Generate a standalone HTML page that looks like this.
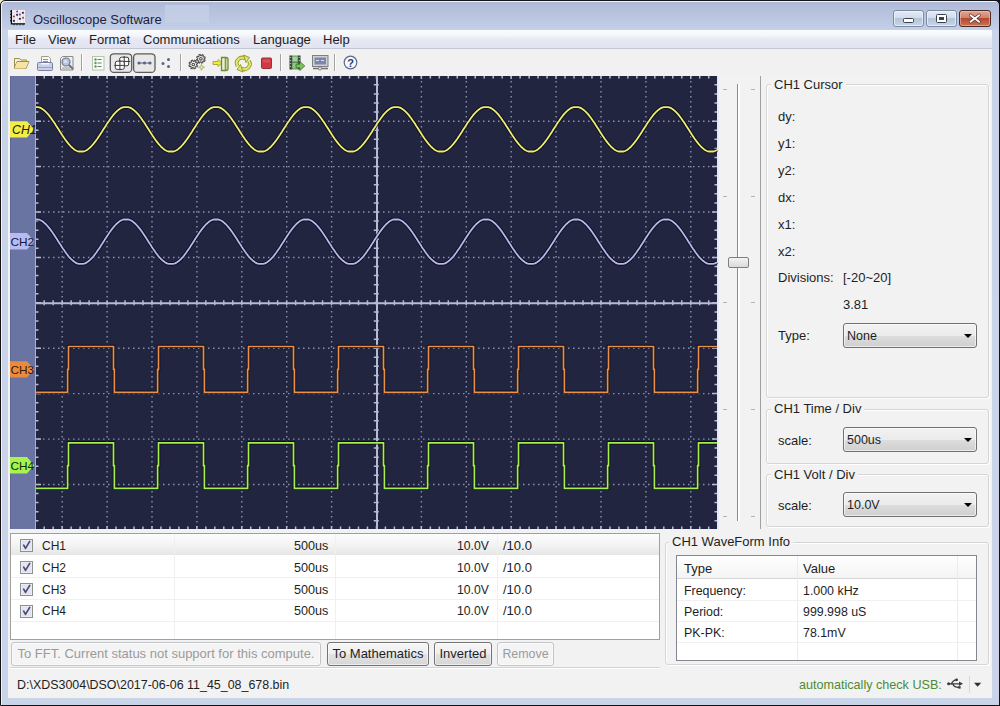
<!DOCTYPE html>
<html><head><meta charset="utf-8">
<style>
*{box-sizing:border-box;margin:0;padding:0}
html,body{width:1000px;height:706px;overflow:hidden;background:linear-gradient(90deg,#f2eed2 50%,#10121a 50%)}
body{font-family:"Liberation Sans",sans-serif;font-size:13px;color:#1e1e1e;position:relative}
.a{position:absolute}
.t{position:absolute;white-space:pre;line-height:14px}
#win{left:0;top:0;width:1000px;height:706px;border:1px solid #141414;border-radius:5px 5px 0 0;box-shadow:inset 1px 1px 0 #eef3fa;
 background:linear-gradient(#aebad8 2px,#b6c2dd 10px,#c2cee6 27px,#cad3ea 30px,#c8d3ea 120px,#cbd3ea 690px,#c6d5e6 706px)}
#client{left:8px;top:30px;width:984px;height:668px;background:#f2f2f2}
#menubar{left:8px;top:30px;width:984px;height:19px;background:linear-gradient(#fbfcfe 0,#f3f5fa 6px,#e6e8f3 9px,#e2e5f1 18px);border-bottom:1px solid #c2c6d2}
.capbtn{top:10px;height:17px;border:1px solid #6b7a94;border-radius:3px;background:linear-gradient(#d9e3f1 0,#cdd9ea 50%,#b8c6dc 51%,#c7d3e6 100%)}
.gb{position:absolute;border:1px solid #d5d5d5;border-radius:3px;box-shadow:inset 1px 1px 0 #fff,1px 1px 0 #fff}
.gbt{position:absolute;background:#f2f2f2;padding:0 3px;white-space:pre;line-height:14px}
.combo{position:absolute;height:25px;border:1px solid #707070;border-radius:3px;background:linear-gradient(#f2f2f2 0,#ebebeb 50%,#dddddd 51%,#cfcfcf 100%);box-shadow:inset 0 0 0 1px rgba(255,255,255,.6)}
.combo span{position:absolute;left:3px;top:5px;white-space:pre;line-height:14px;font-size:12.5px}
.combo i{position:absolute;right:4px;top:10px;width:0;height:0;border-left:4px solid transparent;border-right:4px solid transparent;border-top:4px solid #000}
.btn{position:absolute;height:24px;border:1px solid #747474;border-radius:3px;background:linear-gradient(#f6f6f6 0,#eeeeee 50%,#e2e2e2 51%,#d6d6d6 100%);box-shadow:inset 0 0 0 1px rgba(255,255,255,.55);text-align:center;line-height:21px;white-space:pre}
.btn.dis{border-color:#c2c6ca;background:#f4f4f4;color:#9a9a9a}
</style></head><body>
<div id="win" class="a"></div>
<div id="client" class="a"></div>
<!-- title -->
<svg class="a" style="left:8px;top:7px" width="20" height="20" viewBox="8 7 20 20">
<rect x="12" y="10" width="13" height="13" fill="#f6f2f6"/>
<path d="M14.5 10v13M17.5 10v13M20.5 10v13M23.5 10v13M12 13h13M12 16h13M12 19h13" stroke="#ddd6dc" stroke-width=".6"/>
<path d="M11.4 10v13.9H25" stroke="#0a0a0a" stroke-width="1.3" fill="none"/>
<path d="M10.2 11.3h1M10.2 14.4h1M10.2 17.5h1M10.2 20.6h1M14 24.2v1M17 24.2v1M20 24.2v1M23 24.2v1" stroke="#0a0a0a" stroke-width="1.1"/>
<g fill="#2c2686"><circle cx="22.9" cy="12.8" r="1.1"/><circle cx="17.1" cy="14.8" r="1.1"/><circle cx="19.9" cy="18.8" r="1.1"/><circle cx="13.9" cy="20.9" r="1.1"/></g>
<g fill="#8a4a3a"><circle cx="17.1" cy="11.5" r="1"/><circle cx="19.9" cy="14.6" r="1"/><circle cx="13.9" cy="16.5" r="1"/><circle cx="23" cy="17.8" r="1"/></g>
</svg>
<div class="t" style="left:33px;top:13px;color:#1c2340">Oscilloscope Software</div>
<svg class="a" style="left:880px;top:0" width="120" height="30" viewBox="880 0 120 30">
<defs>
<linearGradient id="cb" x1="0" y1="0" x2="0" y2="1"><stop offset="0" stop-color="#e4ebf5"/><stop offset=".45" stop-color="#d3ddeb"/><stop offset=".5" stop-color="#b4c4db"/><stop offset="1" stop-color="#c9d6e8"/></linearGradient>
<linearGradient id="cc" x1="0" y1="0" x2="0" y2="1"><stop offset="0" stop-color="#e4a898"/><stop offset=".45" stop-color="#d0826e"/><stop offset=".5" stop-color="#b8482e"/><stop offset="1" stop-color="#cc7458"/></linearGradient>
</defs>
<rect x="893.5" y="10.5" width="30" height="16" rx="2.5" fill="url(#cb)" stroke="#7d8aa3" stroke-width="1"/>
<rect x="894.5" y="11.5" width="28" height="14" rx="2" fill="none" stroke="#f2f6fb" stroke-opacity=".7" stroke-width="1"/>
<rect x="926.5" y="10.5" width="30" height="16" rx="2.5" fill="url(#cb)" stroke="#7d8aa3" stroke-width="1"/>
<rect x="927.5" y="11.5" width="28" height="14" rx="2" fill="none" stroke="#f2f6fb" stroke-opacity=".7" stroke-width="1"/>
<rect x="959.5" y="10.5" width="31" height="16" rx="2.5" fill="url(#cc)" stroke="#4a2a24" stroke-width="1"/>
<rect x="960.5" y="11.5" width="29" height="14" rx="2" fill="none" stroke="#f6d0c4" stroke-opacity=".5" stroke-width="1"/>
<rect x="903.5" y="18.5" width="10" height="4" rx="1" fill="#fff" stroke="#3a4050" stroke-width="1"/>
<rect x="936.5" y="14.5" width="10" height="8" rx="1" fill="#fff" stroke="#3a4050" stroke-width="1"/>
<rect x="939" y="17" width="5" height="3" fill="#3a4050"/>
<path d="M970.5 15.2l8.6 6.6M979.1 15.2l-8.6 6.6" stroke="#40302a" stroke-width="3.2" stroke-linecap="round"/>
<path d="M970.5 15.2l8.6 6.6M979.1 15.2l-8.6 6.6" stroke="#fff" stroke-width="1.9" stroke-linecap="round"/>
</svg>
<div class="a" style="left:165px;top:5px;width:44px;height:18px;background:#c6d0e6;opacity:.8"></div>
<!-- menubar -->
<div id="menubar" class="a"></div>
<div class="t" style="left:15px;top:33px">File</div>
<div class="t" style="left:48px;top:33px">View</div>
<div class="t" style="left:89px;top:33px">Format</div>
<div class="t" style="left:143px;top:33px">Communications</div>
<div class="t" style="left:253px;top:33px">Language</div>
<div class="t" style="left:323px;top:33px">Help</div>
<!-- toolbar -->
<div class="a" style="left:8px;top:49px;width:984px;height:27px;background:#f1f1f1"></div>
<svg class="a" style="left:0;top:0" width="370" height="80" viewBox="0 0 370 80">
<!-- folder -->
<path d="M14.5 58.5h5l1.5 1.5h5.5v2" fill="#efe2a8" stroke="#a08f4c" stroke-width="1"/>
<path d="M14.5 58.5v10h11.5l3-7h-12l-2.5 6" fill="#f0e098" stroke="#a08f4c" stroke-width="1" stroke-linejoin="round"/>
<path d="M17 62h11.5l-3 6.5h-11z" fill="#f4e6a0"/>
<!-- printer -->
<path d="M41.5 56.5h7l2 2v5h-9z" fill="#fbfbf4" stroke="#9aa090" stroke-width="1"/>
<path d="M43 59.5h5M43 61.5h5" stroke="#8a8f9a" stroke-width="1"/>
<path d="M38.5 62.5h13a1 1 0 0 1 1 1v6a1 1 0 0 1-1 1h-13a1 1 0 0 1-1-1v-6a1 1 0 0 1 1-1z" fill="#c9d0e8" stroke="#7880a8" stroke-width="1"/>
<path d="M38 67.5h14" stroke="#9aa2c8" stroke-width="1"/>
<path d="M41 63h8v1.5h-8z" fill="#f8f8fc"/>
<!-- preview -->
<path d="M62.5 56.5h10.5v13.5h-12.5v-11.5z" fill="#eeeeee" stroke="#8a8a8a" stroke-width="1"/>
<circle cx="66" cy="62" r="4" fill="#b8c4e0" stroke="#707a90" stroke-width="1.2"/>
<circle cx="65.5" cy="61.5" r="1.6" fill="#dde4f4"/>
<path d="M69 65l4 4" stroke="#707070" stroke-width="2"/>
<path d="M62 68h8" stroke="#9a9a9a" stroke-width="1"/>
<!-- separators -->
<path d="M81.5 54v17M180.5 54v17M280.5 54v17M334.5 54v17" stroke="#a2a2a2" stroke-width="1"/>
<path d="M82.5 54v17M181.5 54v17M281.5 54v17M335.5 54v17" stroke="#ffffff" stroke-width="1"/>
<!-- list icon -->
<rect x="92.5" y="56.5" width="11.5" height="13.5" fill="#f8fbf6" stroke="#b6c4b0" stroke-width="1"/>
<circle cx="95.5" cy="59.5" r="1.2" fill="#5a9a5a"/><circle cx="95.5" cy="63" r="1.2" fill="#5a9a5a"/><circle cx="95.5" cy="66.5" r="1.2" fill="#5a9a5a"/>
<path d="M97.5 59.5h4M97.5 63h4M97.5 66.5h4" stroke="#707870" stroke-width="1"/>
<!-- pressed buttons -->
<rect x="110.3" y="53.8" width="21.4" height="18.6" rx="3.5" fill="#e8e8e8" stroke="#5c5c5c" stroke-width="1.3"/>
<rect x="133.6" y="53.8" width="21.4" height="18.6" rx="3.5" fill="#e8e8e8" stroke="#5c5c5c" stroke-width="1.3"/>
<!-- grid icon -->
<g fill="#fff" stroke="#3c3c3c" stroke-width="1">
<rect x="119.7" y="57.2" width="9" height="8.6" rx="1.8"/>
<path d="M124.2 56v9.8M119.7 61.4h10.6" fill="none"/>
<rect x="115.3" y="61.2" width="9" height="8.2" rx="1.8"/>
<path d="M119.9 60v10.2M114.3 65.4h10" fill="none"/>
</g>
<!-- dots-line icon -->
<path d="M138 63h13" stroke="#8890b0" stroke-width="1.5"/>
<circle cx="139" cy="63" r="1.6" fill="#5a6488"/><circle cx="144.5" cy="63" r="1.6" fill="#5a6488"/><circle cx="150" cy="63" r="1.6" fill="#5a6488"/>
<!-- loose dots -->
<circle cx="163" cy="63.5" r="1.5" fill="#5a6488"/><circle cx="168.5" cy="59.5" r="1.5" fill="#5a6488"/><circle cx="168.5" cy="66.5" r="1.5" fill="#5a6488"/>
<!-- gears -->
<g fill="#f8f8f8" stroke="#505050" stroke-width="1.1">
<path d="M196.44 65.14 L197.48 65.87 L196.95 66.96 L195.73 66.59 L195.07 67.17 L195.28 68.43 L194.14 68.82 L193.54 67.69 L192.66 67.64 L191.93 68.68 L190.84 68.15 L191.21 66.93 L190.63 66.27 L189.37 66.48 L188.98 65.34 L190.11 64.74 L190.16 63.86 L189.12 63.13 L189.65 62.04 L190.87 62.41 L191.53 61.83 L191.32 60.57 L192.46 60.18 L193.06 61.31 L193.94 61.36 L194.67 60.32 L195.76 60.85 L195.39 62.07 L195.97 62.73 L197.23 62.52 L197.62 63.66 L196.49 64.26Z"/><circle cx="193.3" cy="64.5" r="1.3"/>
<path d="M204.04 59.44 L205.08 60.17 L204.55 61.26 L203.33 60.89 L202.67 61.47 L202.88 62.73 L201.74 63.12 L201.14 61.99 L200.26 61.94 L199.53 62.98 L198.44 62.45 L198.81 61.23 L198.23 60.57 L196.97 60.78 L196.58 59.64 L197.71 59.04 L197.76 58.16 L196.72 57.43 L197.25 56.34 L198.47 56.71 L199.13 56.13 L198.92 54.87 L200.06 54.48 L200.66 55.61 L201.54 55.66 L202.27 54.62 L203.36 55.15 L202.99 56.37 L203.57 57.03 L204.83 56.82 L205.22 57.96 L204.09 58.56Z"/><circle cx="200.9" cy="58.8" r="1.3"/>
</g>
<path d="M201.5 64.3l.9 2.1 2.1.9-2.1.9-.9 2.1-.9-2.1-2.1-.9 2.1-.9z" fill="#e4e888" stroke="#98a050" stroke-width=".7"/>
<!-- import -->
<path d="M213 61.5h5v-2l4 3.5-4 3.5v-2h-5z" fill="#f0ea40" stroke="#9a9a30" stroke-width="0.8"/>
<path d="M221.5 57.5h4.5a2 2 0 0 1 2 2v9a2 2 0 0 1-2 2h-4.5z" fill="#e8eed8" stroke="#6f8a30" stroke-width="1.3"/>
<path d="M225.5 58v12" stroke="#7a9a3a" stroke-width="1.6"/>
<!-- refresh -->
<g fill="none" stroke-linecap="butt">
<path d="M237.5 66a5.5 5.5 0 0 1 8-7.2" stroke="#8c9434" stroke-width="3.8"/>
<path d="M249 61a5.5 5.5 0 0 1-8 7.2" stroke="#8c9434" stroke-width="3.8"/>
<path d="M237.5 66a5.5 5.5 0 0 1 8-7.2" stroke="#e2e45a" stroke-width="2.2"/>
<path d="M249 61a5.5 5.5 0 0 1-8 7.2" stroke="#e2e45a" stroke-width="2.2"/>
</g>
<path d="M243.5 55l6 2.5-3.5 5z" fill="#e2e45a" stroke="#8c9434" stroke-width=".9" stroke-linejoin="round"/>
<path d="M243 72l-6-2.5 3.5-5z" fill="#e2e45a" stroke="#8c9434" stroke-width=".9" stroke-linejoin="round"/>
<!-- stop -->
<rect x="261.5" y="58" width="10" height="10.5" rx="1" fill="#cf3a44" stroke="#9a3038" stroke-width="1"/><rect x="263" y="59.5" width="7" height="3" fill="#e06068" opacity=".6"/>
<!-- film -->
<rect x="289.5" y="55.5" width="2.5" height="14" fill="#34423a"/>
<rect x="298" y="55.5" width="2.5" height="14" fill="#34423a"/>
<path d="M290.7 57v1M290.7 60v1M290.7 63v1M290.7 66v1M299.2 57v1M299.2 60v1" stroke="#c8d8c8" stroke-width="1"/>
<rect x="292" y="56" width="6" height="6" fill="#9ad890" stroke="#4a6a4a" stroke-width=".7"/>
<rect x="292" y="62.5" width="6" height="6.5" fill="#8ccc80" stroke="#4a6a4a" stroke-width=".7"/>
<path d="M296 64.2h3.8v-2.7l5 4.5-5 4.5v-2.7h-3.8z" fill="#7cc25a" stroke="#3a7030" stroke-width=".8"/>
<!-- monitor -->
<rect x="312.5" y="55.5" width="15.5" height="11" fill="#d0d0d0" stroke="#808080" stroke-width="1"/>
<rect x="314.5" y="57.5" width="11.5" height="7" fill="#7a88b0"/>
<path d="M316 60.5h3M321 60.5h3" stroke="#dde3f0" stroke-width="1.2"/>
<path d="M313 68.5h15" stroke="#707070" stroke-width="1.5"/>
<circle cx="320" cy="68.5" r="1.6" fill="#e8e8e8" stroke="#707070" stroke-width="0.8"/>
<!-- help -->
<circle cx="350.5" cy="62.5" r="6.3" fill="#f6f8fc" stroke="#5a6890" stroke-width="1.2"/>
<text x="350.5" y="66.8" font-family="Liberation Sans" font-weight="bold" font-size="11" text-anchor="middle" fill="#2a3a78">?</text>
</svg>

<svg width="709" height="453" viewBox="0 0 709 453" style="position:absolute;left:10px;top:76px;display:block"><rect x="0" y="0" width="26" height="453" fill="#6974a2"/><rect x="0" y="0" width="1" height="453" fill="#5d6792"/><rect x="26" y="0" width="681" height="453" fill="#222540"/><g stroke="#8a90ae" stroke-width="1.4" stroke-dasharray="1.5 3.5"><line x1="52.20" y1="0.1" x2="52.20" y2="453" /><line x1="97.10" y1="0.1" x2="97.10" y2="453" /><line x1="142.00" y1="0.1" x2="142.00" y2="453" /><line x1="186.90" y1="0.1" x2="186.90" y2="453" /><line x1="231.80" y1="0.1" x2="231.80" y2="453" /><line x1="276.70" y1="0.1" x2="276.70" y2="453" /><line x1="321.60" y1="0.1" x2="321.60" y2="453" /><line x1="411.40" y1="0.1" x2="411.40" y2="453" /><line x1="456.30" y1="0.1" x2="456.30" y2="453" /><line x1="501.20" y1="0.1" x2="501.20" y2="453" /><line x1="546.10" y1="0.1" x2="546.10" y2="453" /><line x1="591.00" y1="0.1" x2="591.00" y2="453" /><line x1="635.90" y1="0.1" x2="635.90" y2="453" /><line x1="680.80" y1="0.1" x2="680.80" y2="453" /><line x1="28" y1="45.21" x2="707" y2="45.21" /><line x1="28" y1="90.62" x2="707" y2="90.62" /><line x1="28" y1="136.03" x2="707" y2="136.03" /><line x1="28" y1="181.44" x2="707" y2="181.44" /><line x1="28" y1="272.26" x2="707" y2="272.26" /><line x1="28" y1="317.67" x2="707" y2="317.67" /><line x1="28" y1="363.08" x2="707" y2="363.08" /><line x1="28" y1="408.49" x2="707" y2="408.49" /></g><rect x="26" y="226.25" width="681" height="2" fill="#b6bad2"/><rect x="366.00" y="0" width="2" height="453" fill="#b6bad2"/><path d="M33.44 0h1.5v2.5h-1.5zM33.44 450.5h1.5v2.5h-1.5zM33.44 224.15h1.5v5h-1.5zM42.42 0h1.5v2.5h-1.5zM42.42 450.5h1.5v2.5h-1.5zM42.42 224.15h1.5v5h-1.5zM51.40 0h1.5v3h-1.5zM51.40 450h1.5v3h-1.5zM51.40 224.15h1.5v5h-1.5zM60.38 0h1.5v2.5h-1.5zM60.38 450.5h1.5v2.5h-1.5zM60.38 224.15h1.5v5h-1.5zM69.36 0h1.5v2.5h-1.5zM69.36 450.5h1.5v2.5h-1.5zM69.36 224.15h1.5v5h-1.5zM78.34 0h1.5v2.5h-1.5zM78.34 450.5h1.5v2.5h-1.5zM78.34 224.15h1.5v5h-1.5zM87.32 0h1.5v2.5h-1.5zM87.32 450.5h1.5v2.5h-1.5zM87.32 224.15h1.5v5h-1.5zM96.30 0h1.5v3h-1.5zM96.30 450h1.5v3h-1.5zM96.30 224.15h1.5v5h-1.5zM105.28 0h1.5v2.5h-1.5zM105.28 450.5h1.5v2.5h-1.5zM105.28 224.15h1.5v5h-1.5zM114.26 0h1.5v2.5h-1.5zM114.26 450.5h1.5v2.5h-1.5zM114.26 224.15h1.5v5h-1.5zM123.24 0h1.5v2.5h-1.5zM123.24 450.5h1.5v2.5h-1.5zM123.24 224.15h1.5v5h-1.5zM132.22 0h1.5v2.5h-1.5zM132.22 450.5h1.5v2.5h-1.5zM132.22 224.15h1.5v5h-1.5zM141.20 0h1.5v3h-1.5zM141.20 450h1.5v3h-1.5zM141.20 224.15h1.5v5h-1.5zM150.18 0h1.5v2.5h-1.5zM150.18 450.5h1.5v2.5h-1.5zM150.18 224.15h1.5v5h-1.5zM159.16 0h1.5v2.5h-1.5zM159.16 450.5h1.5v2.5h-1.5zM159.16 224.15h1.5v5h-1.5zM168.14 0h1.5v2.5h-1.5zM168.14 450.5h1.5v2.5h-1.5zM168.14 224.15h1.5v5h-1.5zM177.12 0h1.5v2.5h-1.5zM177.12 450.5h1.5v2.5h-1.5zM177.12 224.15h1.5v5h-1.5zM186.10 0h1.5v3h-1.5zM186.10 450h1.5v3h-1.5zM186.10 224.15h1.5v5h-1.5zM195.08 0h1.5v2.5h-1.5zM195.08 450.5h1.5v2.5h-1.5zM195.08 224.15h1.5v5h-1.5zM204.06 0h1.5v2.5h-1.5zM204.06 450.5h1.5v2.5h-1.5zM204.06 224.15h1.5v5h-1.5zM213.04 0h1.5v2.5h-1.5zM213.04 450.5h1.5v2.5h-1.5zM213.04 224.15h1.5v5h-1.5zM222.02 0h1.5v2.5h-1.5zM222.02 450.5h1.5v2.5h-1.5zM222.02 224.15h1.5v5h-1.5zM231.00 0h1.5v3h-1.5zM231.00 450h1.5v3h-1.5zM231.00 224.15h1.5v5h-1.5zM239.98 0h1.5v2.5h-1.5zM239.98 450.5h1.5v2.5h-1.5zM239.98 224.15h1.5v5h-1.5zM248.96 0h1.5v2.5h-1.5zM248.96 450.5h1.5v2.5h-1.5zM248.96 224.15h1.5v5h-1.5zM257.94 0h1.5v2.5h-1.5zM257.94 450.5h1.5v2.5h-1.5zM257.94 224.15h1.5v5h-1.5zM266.92 0h1.5v2.5h-1.5zM266.92 450.5h1.5v2.5h-1.5zM266.92 224.15h1.5v5h-1.5zM275.90 0h1.5v3h-1.5zM275.90 450h1.5v3h-1.5zM275.90 224.15h1.5v5h-1.5zM284.88 0h1.5v2.5h-1.5zM284.88 450.5h1.5v2.5h-1.5zM284.88 224.15h1.5v5h-1.5zM293.86 0h1.5v2.5h-1.5zM293.86 450.5h1.5v2.5h-1.5zM293.86 224.15h1.5v5h-1.5zM302.84 0h1.5v2.5h-1.5zM302.84 450.5h1.5v2.5h-1.5zM302.84 224.15h1.5v5h-1.5zM311.82 0h1.5v2.5h-1.5zM311.82 450.5h1.5v2.5h-1.5zM311.82 224.15h1.5v5h-1.5zM320.80 0h1.5v3h-1.5zM320.80 450h1.5v3h-1.5zM320.80 224.15h1.5v5h-1.5zM329.78 0h1.5v2.5h-1.5zM329.78 450.5h1.5v2.5h-1.5zM329.78 224.15h1.5v5h-1.5zM338.76 0h1.5v2.5h-1.5zM338.76 450.5h1.5v2.5h-1.5zM338.76 224.15h1.5v5h-1.5zM347.74 0h1.5v2.5h-1.5zM347.74 450.5h1.5v2.5h-1.5zM347.74 224.15h1.5v5h-1.5zM356.72 0h1.5v2.5h-1.5zM356.72 450.5h1.5v2.5h-1.5zM356.72 224.15h1.5v5h-1.5zM365.70 0h1.5v3h-1.5zM365.70 450h1.5v3h-1.5zM365.70 224.15h1.5v5h-1.5zM374.68 0h1.5v2.5h-1.5zM374.68 450.5h1.5v2.5h-1.5zM374.68 224.15h1.5v5h-1.5zM383.66 0h1.5v2.5h-1.5zM383.66 450.5h1.5v2.5h-1.5zM383.66 224.15h1.5v5h-1.5zM392.64 0h1.5v2.5h-1.5zM392.64 450.5h1.5v2.5h-1.5zM392.64 224.15h1.5v5h-1.5zM401.62 0h1.5v2.5h-1.5zM401.62 450.5h1.5v2.5h-1.5zM401.62 224.15h1.5v5h-1.5zM410.60 0h1.5v3h-1.5zM410.60 450h1.5v3h-1.5zM410.60 224.15h1.5v5h-1.5zM419.58 0h1.5v2.5h-1.5zM419.58 450.5h1.5v2.5h-1.5zM419.58 224.15h1.5v5h-1.5zM428.56 0h1.5v2.5h-1.5zM428.56 450.5h1.5v2.5h-1.5zM428.56 224.15h1.5v5h-1.5zM437.54 0h1.5v2.5h-1.5zM437.54 450.5h1.5v2.5h-1.5zM437.54 224.15h1.5v5h-1.5zM446.52 0h1.5v2.5h-1.5zM446.52 450.5h1.5v2.5h-1.5zM446.52 224.15h1.5v5h-1.5zM455.50 0h1.5v3h-1.5zM455.50 450h1.5v3h-1.5zM455.50 224.15h1.5v5h-1.5zM464.48 0h1.5v2.5h-1.5zM464.48 450.5h1.5v2.5h-1.5zM464.48 224.15h1.5v5h-1.5zM473.46 0h1.5v2.5h-1.5zM473.46 450.5h1.5v2.5h-1.5zM473.46 224.15h1.5v5h-1.5zM482.44 0h1.5v2.5h-1.5zM482.44 450.5h1.5v2.5h-1.5zM482.44 224.15h1.5v5h-1.5zM491.42 0h1.5v2.5h-1.5zM491.42 450.5h1.5v2.5h-1.5zM491.42 224.15h1.5v5h-1.5zM500.40 0h1.5v3h-1.5zM500.40 450h1.5v3h-1.5zM500.40 224.15h1.5v5h-1.5zM509.38 0h1.5v2.5h-1.5zM509.38 450.5h1.5v2.5h-1.5zM509.38 224.15h1.5v5h-1.5zM518.36 0h1.5v2.5h-1.5zM518.36 450.5h1.5v2.5h-1.5zM518.36 224.15h1.5v5h-1.5zM527.34 0h1.5v2.5h-1.5zM527.34 450.5h1.5v2.5h-1.5zM527.34 224.15h1.5v5h-1.5zM536.32 0h1.5v2.5h-1.5zM536.32 450.5h1.5v2.5h-1.5zM536.32 224.15h1.5v5h-1.5zM545.30 0h1.5v3h-1.5zM545.30 450h1.5v3h-1.5zM545.30 224.15h1.5v5h-1.5zM554.28 0h1.5v2.5h-1.5zM554.28 450.5h1.5v2.5h-1.5zM554.28 224.15h1.5v5h-1.5zM563.26 0h1.5v2.5h-1.5zM563.26 450.5h1.5v2.5h-1.5zM563.26 224.15h1.5v5h-1.5zM572.24 0h1.5v2.5h-1.5zM572.24 450.5h1.5v2.5h-1.5zM572.24 224.15h1.5v5h-1.5zM581.22 0h1.5v2.5h-1.5zM581.22 450.5h1.5v2.5h-1.5zM581.22 224.15h1.5v5h-1.5zM590.20 0h1.5v3h-1.5zM590.20 450h1.5v3h-1.5zM590.20 224.15h1.5v5h-1.5zM599.18 0h1.5v2.5h-1.5zM599.18 450.5h1.5v2.5h-1.5zM599.18 224.15h1.5v5h-1.5zM608.16 0h1.5v2.5h-1.5zM608.16 450.5h1.5v2.5h-1.5zM608.16 224.15h1.5v5h-1.5zM617.14 0h1.5v2.5h-1.5zM617.14 450.5h1.5v2.5h-1.5zM617.14 224.15h1.5v5h-1.5zM626.12 0h1.5v2.5h-1.5zM626.12 450.5h1.5v2.5h-1.5zM626.12 224.15h1.5v5h-1.5zM635.10 0h1.5v3h-1.5zM635.10 450h1.5v3h-1.5zM635.10 224.15h1.5v5h-1.5zM644.08 0h1.5v2.5h-1.5zM644.08 450.5h1.5v2.5h-1.5zM644.08 224.15h1.5v5h-1.5zM653.06 0h1.5v2.5h-1.5zM653.06 450.5h1.5v2.5h-1.5zM653.06 224.15h1.5v5h-1.5zM662.04 0h1.5v2.5h-1.5zM662.04 450.5h1.5v2.5h-1.5zM662.04 224.15h1.5v5h-1.5zM671.02 0h1.5v2.5h-1.5zM671.02 450.5h1.5v2.5h-1.5zM671.02 224.15h1.5v5h-1.5zM680.00 0h1.5v3h-1.5zM680.00 450h1.5v3h-1.5zM680.00 224.15h1.5v5h-1.5zM688.98 0h1.5v2.5h-1.5zM688.98 450.5h1.5v2.5h-1.5zM688.98 224.15h1.5v5h-1.5zM697.96 0h1.5v2.5h-1.5zM697.96 450.5h1.5v2.5h-1.5zM697.96 224.15h1.5v5h-1.5zM26 8.08h2.5v1.5h-2.5zM704.5 8.08h2.5v1.5h-2.5zM363.80 8.08h5v1.5h-5zM26 17.16h2.5v1.5h-2.5zM704.5 17.16h2.5v1.5h-2.5zM363.80 17.16h5v1.5h-5zM26 26.25h2.5v1.5h-2.5zM704.5 26.25h2.5v1.5h-2.5zM363.80 26.25h5v1.5h-5zM26 35.33h2.5v1.5h-2.5zM704.5 35.33h2.5v1.5h-2.5zM363.80 35.33h5v1.5h-5zM26 44.41h5v1.5h-5zM702 44.41h5v1.5h-5zM363.80 44.41h5v1.5h-5zM26 53.49h2.5v1.5h-2.5zM704.5 53.49h2.5v1.5h-2.5zM363.80 53.49h5v1.5h-5zM26 62.57h2.5v1.5h-2.5zM704.5 62.57h2.5v1.5h-2.5zM363.80 62.57h5v1.5h-5zM26 71.66h2.5v1.5h-2.5zM704.5 71.66h2.5v1.5h-2.5zM363.80 71.66h5v1.5h-5zM26 80.74h2.5v1.5h-2.5zM704.5 80.74h2.5v1.5h-2.5zM363.80 80.74h5v1.5h-5zM26 89.82h5v1.5h-5zM702 89.82h5v1.5h-5zM363.80 89.82h5v1.5h-5zM26 98.90h2.5v1.5h-2.5zM704.5 98.90h2.5v1.5h-2.5zM363.80 98.90h5v1.5h-5zM26 107.98h2.5v1.5h-2.5zM704.5 107.98h2.5v1.5h-2.5zM363.80 107.98h5v1.5h-5zM26 117.07h2.5v1.5h-2.5zM704.5 117.07h2.5v1.5h-2.5zM363.80 117.07h5v1.5h-5zM26 126.15h2.5v1.5h-2.5zM704.5 126.15h2.5v1.5h-2.5zM363.80 126.15h5v1.5h-5zM26 135.23h5v1.5h-5zM702 135.23h5v1.5h-5zM363.80 135.23h5v1.5h-5zM26 144.31h2.5v1.5h-2.5zM704.5 144.31h2.5v1.5h-2.5zM363.80 144.31h5v1.5h-5zM26 153.39h2.5v1.5h-2.5zM704.5 153.39h2.5v1.5h-2.5zM363.80 153.39h5v1.5h-5zM26 162.48h2.5v1.5h-2.5zM704.5 162.48h2.5v1.5h-2.5zM363.80 162.48h5v1.5h-5zM26 171.56h2.5v1.5h-2.5zM704.5 171.56h2.5v1.5h-2.5zM363.80 171.56h5v1.5h-5zM26 180.64h5v1.5h-5zM702 180.64h5v1.5h-5zM363.80 180.64h5v1.5h-5zM26 189.72h2.5v1.5h-2.5zM704.5 189.72h2.5v1.5h-2.5zM363.80 189.72h5v1.5h-5zM26 198.80h2.5v1.5h-2.5zM704.5 198.80h2.5v1.5h-2.5zM363.80 198.80h5v1.5h-5zM26 207.89h2.5v1.5h-2.5zM704.5 207.89h2.5v1.5h-2.5zM363.80 207.89h5v1.5h-5zM26 216.97h2.5v1.5h-2.5zM704.5 216.97h2.5v1.5h-2.5zM363.80 216.97h5v1.5h-5zM26 226.05h5v1.5h-5zM702 226.05h5v1.5h-5zM363.80 226.05h5v1.5h-5zM26 235.13h2.5v1.5h-2.5zM704.5 235.13h2.5v1.5h-2.5zM363.80 235.13h5v1.5h-5zM26 244.21h2.5v1.5h-2.5zM704.5 244.21h2.5v1.5h-2.5zM363.80 244.21h5v1.5h-5zM26 253.30h2.5v1.5h-2.5zM704.5 253.30h2.5v1.5h-2.5zM363.80 253.30h5v1.5h-5zM26 262.38h2.5v1.5h-2.5zM704.5 262.38h2.5v1.5h-2.5zM363.80 262.38h5v1.5h-5zM26 271.46h5v1.5h-5zM702 271.46h5v1.5h-5zM363.80 271.46h5v1.5h-5zM26 280.54h2.5v1.5h-2.5zM704.5 280.54h2.5v1.5h-2.5zM363.80 280.54h5v1.5h-5zM26 289.62h2.5v1.5h-2.5zM704.5 289.62h2.5v1.5h-2.5zM363.80 289.62h5v1.5h-5zM26 298.71h2.5v1.5h-2.5zM704.5 298.71h2.5v1.5h-2.5zM363.80 298.71h5v1.5h-5zM26 307.79h2.5v1.5h-2.5zM704.5 307.79h2.5v1.5h-2.5zM363.80 307.79h5v1.5h-5zM26 316.87h5v1.5h-5zM702 316.87h5v1.5h-5zM363.80 316.87h5v1.5h-5zM26 325.95h2.5v1.5h-2.5zM704.5 325.95h2.5v1.5h-2.5zM363.80 325.95h5v1.5h-5zM26 335.03h2.5v1.5h-2.5zM704.5 335.03h2.5v1.5h-2.5zM363.80 335.03h5v1.5h-5zM26 344.12h2.5v1.5h-2.5zM704.5 344.12h2.5v1.5h-2.5zM363.80 344.12h5v1.5h-5zM26 353.20h2.5v1.5h-2.5zM704.5 353.20h2.5v1.5h-2.5zM363.80 353.20h5v1.5h-5zM26 362.28h5v1.5h-5zM702 362.28h5v1.5h-5zM363.80 362.28h5v1.5h-5zM26 371.36h2.5v1.5h-2.5zM704.5 371.36h2.5v1.5h-2.5zM363.80 371.36h5v1.5h-5zM26 380.44h2.5v1.5h-2.5zM704.5 380.44h2.5v1.5h-2.5zM363.80 380.44h5v1.5h-5zM26 389.53h2.5v1.5h-2.5zM704.5 389.53h2.5v1.5h-2.5zM363.80 389.53h5v1.5h-5zM26 398.61h2.5v1.5h-2.5zM704.5 398.61h2.5v1.5h-2.5zM363.80 398.61h5v1.5h-5zM26 407.69h5v1.5h-5zM702 407.69h5v1.5h-5zM363.80 407.69h5v1.5h-5zM26 416.77h2.5v1.5h-2.5zM704.5 416.77h2.5v1.5h-2.5zM363.80 416.77h5v1.5h-5zM26 425.85h2.5v1.5h-2.5zM704.5 425.85h2.5v1.5h-2.5zM363.80 425.85h5v1.5h-5zM26 434.94h2.5v1.5h-2.5zM704.5 434.94h2.5v1.5h-2.5zM363.80 434.94h5v1.5h-5zM26 444.02h2.5v1.5h-2.5zM704.5 444.02h2.5v1.5h-2.5zM363.80 444.02h5v1.5h-5z" fill="#b6bad2"/><rect x="25" y="0" width="1" height="453" fill="#a9b0d8"/><rect x="707" y="0" width="2" height="453" fill="#e6e8f4"/><path d="M26.0 31.1 L27.0 31.1 L28.0 31.1 L29.0 31.3 L30.0 31.6 L31.0 32.1 L32.0 32.7 L33.0 33.4 L34.0 34.2 L35.0 35.1 L36.0 36.0 L37.0 37.1 L38.0 38.2 L39.0 39.4 L40.0 40.7 L41.0 42.0 L42.0 43.4 L43.0 44.9 L44.0 46.3 L45.0 47.8 L46.0 49.4 L47.0 50.9 L48.0 52.5 L49.0 54.1 L50.0 55.7 L51.0 57.2 L52.0 58.8 L53.0 60.3 L54.0 61.7 L55.0 63.2 L56.0 64.6 L57.0 65.9 L58.0 67.2 L59.0 68.4 L60.0 69.5 L61.0 70.6 L62.0 71.5 L63.0 72.4 L64.0 73.2 L65.0 73.9 L66.0 74.5 L67.0 75.0 L68.0 75.3 L69.0 75.5 L70.0 75.5 L71.0 75.5 L72.0 75.5 L73.0 75.5 L74.0 75.3 L75.0 75.0 L76.0 74.5 L77.0 73.9 L78.0 73.2 L79.0 72.4 L80.0 71.5 L81.0 70.6 L82.0 69.5 L83.0 68.4 L84.0 67.2 L85.0 65.9 L86.0 64.6 L87.0 63.2 L88.0 61.7 L89.0 60.3 L90.0 58.8 L91.0 57.2 L92.0 55.7 L93.0 54.1 L94.0 52.5 L95.0 50.9 L96.0 49.4 L97.0 47.8 L98.0 46.3 L99.0 44.9 L100.0 43.4 L101.0 42.0 L102.0 40.7 L103.0 39.4 L104.0 38.2 L105.0 37.1 L106.0 36.0 L107.0 35.1 L108.0 34.2 L109.0 33.4 L110.0 32.7 L111.0 32.1 L112.0 31.6 L113.0 31.3 L114.0 31.1 L115.0 31.1 L116.0 31.1 L117.0 31.1 L118.0 31.1 L119.0 31.3 L120.0 31.6 L121.0 32.1 L122.0 32.7 L123.0 33.4 L124.0 34.2 L125.0 35.1 L126.0 36.0 L127.0 37.1 L128.0 38.2 L129.0 39.4 L130.0 40.7 L131.0 42.0 L132.0 43.4 L133.0 44.9 L134.0 46.3 L135.0 47.8 L136.0 49.4 L137.0 50.9 L138.0 52.5 L139.0 54.1 L140.0 55.7 L141.0 57.2 L142.0 58.8 L143.0 60.3 L144.0 61.7 L145.0 63.2 L146.0 64.6 L147.0 65.9 L148.0 67.2 L149.0 68.4 L150.0 69.5 L151.0 70.6 L152.0 71.5 L153.0 72.4 L154.0 73.2 L155.0 73.9 L156.0 74.5 L157.0 75.0 L158.0 75.3 L159.0 75.5 L160.0 75.5 L161.0 75.5 L162.0 75.5 L163.0 75.5 L164.0 75.3 L165.0 75.0 L166.0 74.5 L167.0 73.9 L168.0 73.2 L169.0 72.4 L170.0 71.5 L171.0 70.6 L172.0 69.5 L173.0 68.4 L174.0 67.2 L175.0 65.9 L176.0 64.6 L177.0 63.2 L178.0 61.7 L179.0 60.3 L180.0 58.8 L181.0 57.2 L182.0 55.7 L183.0 54.1 L184.0 52.5 L185.0 50.9 L186.0 49.4 L187.0 47.8 L188.0 46.3 L189.0 44.9 L190.0 43.4 L191.0 42.0 L192.0 40.7 L193.0 39.4 L194.0 38.2 L195.0 37.1 L196.0 36.0 L197.0 35.1 L198.0 34.2 L199.0 33.4 L200.0 32.7 L201.0 32.1 L202.0 31.6 L203.0 31.3 L204.0 31.1 L205.0 31.1 L206.0 31.1 L207.0 31.1 L208.0 31.1 L209.0 31.3 L210.0 31.6 L211.0 32.1 L212.0 32.7 L213.0 33.4 L214.0 34.2 L215.0 35.1 L216.0 36.0 L217.0 37.1 L218.0 38.2 L219.0 39.4 L220.0 40.7 L221.0 42.0 L222.0 43.4 L223.0 44.9 L224.0 46.3 L225.0 47.8 L226.0 49.4 L227.0 50.9 L228.0 52.5 L229.0 54.1 L230.0 55.7 L231.0 57.2 L232.0 58.8 L233.0 60.3 L234.0 61.7 L235.0 63.2 L236.0 64.6 L237.0 65.9 L238.0 67.2 L239.0 68.4 L240.0 69.5 L241.0 70.6 L242.0 71.5 L243.0 72.4 L244.0 73.2 L245.0 73.9 L246.0 74.5 L247.0 75.0 L248.0 75.3 L249.0 75.5 L250.0 75.5 L251.0 75.5 L252.0 75.5 L253.0 75.5 L254.0 75.3 L255.0 75.0 L256.0 74.5 L257.0 73.9 L258.0 73.2 L259.0 72.4 L260.0 71.5 L261.0 70.6 L262.0 69.5 L263.0 68.4 L264.0 67.2 L265.0 65.9 L266.0 64.6 L267.0 63.2 L268.0 61.7 L269.0 60.3 L270.0 58.8 L271.0 57.2 L272.0 55.7 L273.0 54.1 L274.0 52.5 L275.0 50.9 L276.0 49.4 L277.0 47.8 L278.0 46.3 L279.0 44.9 L280.0 43.4 L281.0 42.0 L282.0 40.7 L283.0 39.4 L284.0 38.2 L285.0 37.1 L286.0 36.0 L287.0 35.1 L288.0 34.2 L289.0 33.4 L290.0 32.7 L291.0 32.1 L292.0 31.6 L293.0 31.3 L294.0 31.1 L295.0 31.1 L296.0 31.1 L297.0 31.1 L298.0 31.1 L299.0 31.3 L300.0 31.6 L301.0 32.1 L302.0 32.7 L303.0 33.4 L304.0 34.2 L305.0 35.1 L306.0 36.0 L307.0 37.1 L308.0 38.2 L309.0 39.4 L310.0 40.7 L311.0 42.0 L312.0 43.4 L313.0 44.9 L314.0 46.3 L315.0 47.8 L316.0 49.4 L317.0 50.9 L318.0 52.5 L319.0 54.1 L320.0 55.7 L321.0 57.2 L322.0 58.8 L323.0 60.3 L324.0 61.7 L325.0 63.2 L326.0 64.6 L327.0 65.9 L328.0 67.2 L329.0 68.4 L330.0 69.5 L331.0 70.6 L332.0 71.5 L333.0 72.4 L334.0 73.2 L335.0 73.9 L336.0 74.5 L337.0 75.0 L338.0 75.3 L339.0 75.5 L340.0 75.5 L341.0 75.5 L342.0 75.5 L343.0 75.5 L344.0 75.3 L345.0 75.0 L346.0 74.5 L347.0 73.9 L348.0 73.2 L349.0 72.4 L350.0 71.5 L351.0 70.6 L352.0 69.5 L353.0 68.4 L354.0 67.2 L355.0 65.9 L356.0 64.6 L357.0 63.2 L358.0 61.7 L359.0 60.3 L360.0 58.8 L361.0 57.2 L362.0 55.7 L363.0 54.1 L364.0 52.5 L365.0 50.9 L366.0 49.4 L367.0 47.8 L368.0 46.3 L369.0 44.9 L370.0 43.4 L371.0 42.0 L372.0 40.7 L373.0 39.4 L374.0 38.2 L375.0 37.1 L376.0 36.0 L377.0 35.1 L378.0 34.2 L379.0 33.4 L380.0 32.7 L381.0 32.1 L382.0 31.6 L383.0 31.3 L384.0 31.1 L385.0 31.1 L386.0 31.1 L387.0 31.1 L388.0 31.1 L389.0 31.3 L390.0 31.6 L391.0 32.1 L392.0 32.7 L393.0 33.4 L394.0 34.2 L395.0 35.1 L396.0 36.0 L397.0 37.1 L398.0 38.2 L399.0 39.4 L400.0 40.7 L401.0 42.0 L402.0 43.4 L403.0 44.9 L404.0 46.3 L405.0 47.8 L406.0 49.4 L407.0 50.9 L408.0 52.5 L409.0 54.1 L410.0 55.7 L411.0 57.2 L412.0 58.8 L413.0 60.3 L414.0 61.7 L415.0 63.2 L416.0 64.6 L417.0 65.9 L418.0 67.2 L419.0 68.4 L420.0 69.5 L421.0 70.6 L422.0 71.5 L423.0 72.4 L424.0 73.2 L425.0 73.9 L426.0 74.5 L427.0 75.0 L428.0 75.3 L429.0 75.5 L430.0 75.5 L431.0 75.5 L432.0 75.5 L433.0 75.5 L434.0 75.3 L435.0 75.0 L436.0 74.5 L437.0 73.9 L438.0 73.2 L439.0 72.4 L440.0 71.5 L441.0 70.6 L442.0 69.5 L443.0 68.4 L444.0 67.2 L445.0 65.9 L446.0 64.6 L447.0 63.2 L448.0 61.7 L449.0 60.3 L450.0 58.8 L451.0 57.2 L452.0 55.7 L453.0 54.1 L454.0 52.5 L455.0 50.9 L456.0 49.4 L457.0 47.8 L458.0 46.3 L459.0 44.9 L460.0 43.4 L461.0 42.0 L462.0 40.7 L463.0 39.4 L464.0 38.2 L465.0 37.1 L466.0 36.0 L467.0 35.1 L468.0 34.2 L469.0 33.4 L470.0 32.7 L471.0 32.1 L472.0 31.6 L473.0 31.3 L474.0 31.1 L475.0 31.1 L476.0 31.1 L477.0 31.1 L478.0 31.1 L479.0 31.3 L480.0 31.6 L481.0 32.1 L482.0 32.7 L483.0 33.4 L484.0 34.2 L485.0 35.1 L486.0 36.0 L487.0 37.1 L488.0 38.2 L489.0 39.4 L490.0 40.7 L491.0 42.0 L492.0 43.4 L493.0 44.9 L494.0 46.3 L495.0 47.8 L496.0 49.4 L497.0 50.9 L498.0 52.5 L499.0 54.1 L500.0 55.7 L501.0 57.2 L502.0 58.8 L503.0 60.3 L504.0 61.7 L505.0 63.2 L506.0 64.6 L507.0 65.9 L508.0 67.2 L509.0 68.4 L510.0 69.5 L511.0 70.6 L512.0 71.5 L513.0 72.4 L514.0 73.2 L515.0 73.9 L516.0 74.5 L517.0 75.0 L518.0 75.3 L519.0 75.5 L520.0 75.5 L521.0 75.5 L522.0 75.5 L523.0 75.5 L524.0 75.3 L525.0 75.0 L526.0 74.5 L527.0 73.9 L528.0 73.2 L529.0 72.4 L530.0 71.5 L531.0 70.6 L532.0 69.5 L533.0 68.4 L534.0 67.2 L535.0 65.9 L536.0 64.6 L537.0 63.2 L538.0 61.7 L539.0 60.3 L540.0 58.8 L541.0 57.2 L542.0 55.7 L543.0 54.1 L544.0 52.5 L545.0 50.9 L546.0 49.4 L547.0 47.8 L548.0 46.3 L549.0 44.9 L550.0 43.4 L551.0 42.0 L552.0 40.7 L553.0 39.4 L554.0 38.2 L555.0 37.1 L556.0 36.0 L557.0 35.1 L558.0 34.2 L559.0 33.4 L560.0 32.7 L561.0 32.1 L562.0 31.6 L563.0 31.3 L564.0 31.1 L565.0 31.1 L566.0 31.1 L567.0 31.1 L568.0 31.1 L569.0 31.3 L570.0 31.6 L571.0 32.1 L572.0 32.7 L573.0 33.4 L574.0 34.2 L575.0 35.1 L576.0 36.0 L577.0 37.1 L578.0 38.2 L579.0 39.4 L580.0 40.7 L581.0 42.0 L582.0 43.4 L583.0 44.9 L584.0 46.3 L585.0 47.8 L586.0 49.4 L587.0 50.9 L588.0 52.5 L589.0 54.1 L590.0 55.7 L591.0 57.2 L592.0 58.8 L593.0 60.3 L594.0 61.7 L595.0 63.2 L596.0 64.6 L597.0 65.9 L598.0 67.2 L599.0 68.4 L600.0 69.5 L601.0 70.6 L602.0 71.5 L603.0 72.4 L604.0 73.2 L605.0 73.9 L606.0 74.5 L607.0 75.0 L608.0 75.3 L609.0 75.5 L610.0 75.5 L611.0 75.5 L612.0 75.5 L613.0 75.5 L614.0 75.3 L615.0 75.0 L616.0 74.5 L617.0 73.9 L618.0 73.2 L619.0 72.4 L620.0 71.5 L621.0 70.6 L622.0 69.5 L623.0 68.4 L624.0 67.2 L625.0 65.9 L626.0 64.6 L627.0 63.2 L628.0 61.7 L629.0 60.3 L630.0 58.8 L631.0 57.2 L632.0 55.7 L633.0 54.1 L634.0 52.5 L635.0 50.9 L636.0 49.4 L637.0 47.8 L638.0 46.3 L639.0 44.9 L640.0 43.4 L641.0 42.0 L642.0 40.7 L643.0 39.4 L644.0 38.2 L645.0 37.1 L646.0 36.0 L647.0 35.1 L648.0 34.2 L649.0 33.4 L650.0 32.7 L651.0 32.1 L652.0 31.6 L653.0 31.3 L654.0 31.1 L655.0 31.1 L656.0 31.1 L657.0 31.1 L658.0 31.1 L659.0 31.3 L660.0 31.6 L661.0 32.1 L662.0 32.7 L663.0 33.4 L664.0 34.2 L665.0 35.1 L666.0 36.0 L667.0 37.1 L668.0 38.2 L669.0 39.4 L670.0 40.7 L671.0 42.0 L672.0 43.4 L673.0 44.9 L674.0 46.3 L675.0 47.8 L676.0 49.4 L677.0 50.9 L678.0 52.5 L679.0 54.1 L680.0 55.7 L681.0 57.2 L682.0 58.8 L683.0 60.3 L684.0 61.7 L685.0 63.2 L686.0 64.6 L687.0 65.9 L688.0 67.2 L689.0 68.4 L690.0 69.5 L691.0 70.6 L692.0 71.5 L693.0 72.4 L694.0 73.2 L695.0 73.9 L696.0 74.5 L697.0 75.0 L698.0 75.3 L699.0 75.5 L700.0 75.5 L701.0 75.5 L702.0 75.5 L703.0 75.5 L704.0 75.3 L705.0 75.0 L706.0 74.5 L707.0 73.9" fill="none" stroke="#05060c" stroke-opacity=".75" stroke-width="3.6" stroke-linejoin="round"/><path d="M26.0 31.1 L27.0 31.1 L28.0 31.1 L29.0 31.3 L30.0 31.6 L31.0 32.1 L32.0 32.7 L33.0 33.4 L34.0 34.2 L35.0 35.1 L36.0 36.0 L37.0 37.1 L38.0 38.2 L39.0 39.4 L40.0 40.7 L41.0 42.0 L42.0 43.4 L43.0 44.9 L44.0 46.3 L45.0 47.8 L46.0 49.4 L47.0 50.9 L48.0 52.5 L49.0 54.1 L50.0 55.7 L51.0 57.2 L52.0 58.8 L53.0 60.3 L54.0 61.7 L55.0 63.2 L56.0 64.6 L57.0 65.9 L58.0 67.2 L59.0 68.4 L60.0 69.5 L61.0 70.6 L62.0 71.5 L63.0 72.4 L64.0 73.2 L65.0 73.9 L66.0 74.5 L67.0 75.0 L68.0 75.3 L69.0 75.5 L70.0 75.5 L71.0 75.5 L72.0 75.5 L73.0 75.5 L74.0 75.3 L75.0 75.0 L76.0 74.5 L77.0 73.9 L78.0 73.2 L79.0 72.4 L80.0 71.5 L81.0 70.6 L82.0 69.5 L83.0 68.4 L84.0 67.2 L85.0 65.9 L86.0 64.6 L87.0 63.2 L88.0 61.7 L89.0 60.3 L90.0 58.8 L91.0 57.2 L92.0 55.7 L93.0 54.1 L94.0 52.5 L95.0 50.9 L96.0 49.4 L97.0 47.8 L98.0 46.3 L99.0 44.9 L100.0 43.4 L101.0 42.0 L102.0 40.7 L103.0 39.4 L104.0 38.2 L105.0 37.1 L106.0 36.0 L107.0 35.1 L108.0 34.2 L109.0 33.4 L110.0 32.7 L111.0 32.1 L112.0 31.6 L113.0 31.3 L114.0 31.1 L115.0 31.1 L116.0 31.1 L117.0 31.1 L118.0 31.1 L119.0 31.3 L120.0 31.6 L121.0 32.1 L122.0 32.7 L123.0 33.4 L124.0 34.2 L125.0 35.1 L126.0 36.0 L127.0 37.1 L128.0 38.2 L129.0 39.4 L130.0 40.7 L131.0 42.0 L132.0 43.4 L133.0 44.9 L134.0 46.3 L135.0 47.8 L136.0 49.4 L137.0 50.9 L138.0 52.5 L139.0 54.1 L140.0 55.7 L141.0 57.2 L142.0 58.8 L143.0 60.3 L144.0 61.7 L145.0 63.2 L146.0 64.6 L147.0 65.9 L148.0 67.2 L149.0 68.4 L150.0 69.5 L151.0 70.6 L152.0 71.5 L153.0 72.4 L154.0 73.2 L155.0 73.9 L156.0 74.5 L157.0 75.0 L158.0 75.3 L159.0 75.5 L160.0 75.5 L161.0 75.5 L162.0 75.5 L163.0 75.5 L164.0 75.3 L165.0 75.0 L166.0 74.5 L167.0 73.9 L168.0 73.2 L169.0 72.4 L170.0 71.5 L171.0 70.6 L172.0 69.5 L173.0 68.4 L174.0 67.2 L175.0 65.9 L176.0 64.6 L177.0 63.2 L178.0 61.7 L179.0 60.3 L180.0 58.8 L181.0 57.2 L182.0 55.7 L183.0 54.1 L184.0 52.5 L185.0 50.9 L186.0 49.4 L187.0 47.8 L188.0 46.3 L189.0 44.9 L190.0 43.4 L191.0 42.0 L192.0 40.7 L193.0 39.4 L194.0 38.2 L195.0 37.1 L196.0 36.0 L197.0 35.1 L198.0 34.2 L199.0 33.4 L200.0 32.7 L201.0 32.1 L202.0 31.6 L203.0 31.3 L204.0 31.1 L205.0 31.1 L206.0 31.1 L207.0 31.1 L208.0 31.1 L209.0 31.3 L210.0 31.6 L211.0 32.1 L212.0 32.7 L213.0 33.4 L214.0 34.2 L215.0 35.1 L216.0 36.0 L217.0 37.1 L218.0 38.2 L219.0 39.4 L220.0 40.7 L221.0 42.0 L222.0 43.4 L223.0 44.9 L224.0 46.3 L225.0 47.8 L226.0 49.4 L227.0 50.9 L228.0 52.5 L229.0 54.1 L230.0 55.7 L231.0 57.2 L232.0 58.8 L233.0 60.3 L234.0 61.7 L235.0 63.2 L236.0 64.6 L237.0 65.9 L238.0 67.2 L239.0 68.4 L240.0 69.5 L241.0 70.6 L242.0 71.5 L243.0 72.4 L244.0 73.2 L245.0 73.9 L246.0 74.5 L247.0 75.0 L248.0 75.3 L249.0 75.5 L250.0 75.5 L251.0 75.5 L252.0 75.5 L253.0 75.5 L254.0 75.3 L255.0 75.0 L256.0 74.5 L257.0 73.9 L258.0 73.2 L259.0 72.4 L260.0 71.5 L261.0 70.6 L262.0 69.5 L263.0 68.4 L264.0 67.2 L265.0 65.9 L266.0 64.6 L267.0 63.2 L268.0 61.7 L269.0 60.3 L270.0 58.8 L271.0 57.2 L272.0 55.7 L273.0 54.1 L274.0 52.5 L275.0 50.9 L276.0 49.4 L277.0 47.8 L278.0 46.3 L279.0 44.9 L280.0 43.4 L281.0 42.0 L282.0 40.7 L283.0 39.4 L284.0 38.2 L285.0 37.1 L286.0 36.0 L287.0 35.1 L288.0 34.2 L289.0 33.4 L290.0 32.7 L291.0 32.1 L292.0 31.6 L293.0 31.3 L294.0 31.1 L295.0 31.1 L296.0 31.1 L297.0 31.1 L298.0 31.1 L299.0 31.3 L300.0 31.6 L301.0 32.1 L302.0 32.7 L303.0 33.4 L304.0 34.2 L305.0 35.1 L306.0 36.0 L307.0 37.1 L308.0 38.2 L309.0 39.4 L310.0 40.7 L311.0 42.0 L312.0 43.4 L313.0 44.9 L314.0 46.3 L315.0 47.8 L316.0 49.4 L317.0 50.9 L318.0 52.5 L319.0 54.1 L320.0 55.7 L321.0 57.2 L322.0 58.8 L323.0 60.3 L324.0 61.7 L325.0 63.2 L326.0 64.6 L327.0 65.9 L328.0 67.2 L329.0 68.4 L330.0 69.5 L331.0 70.6 L332.0 71.5 L333.0 72.4 L334.0 73.2 L335.0 73.9 L336.0 74.5 L337.0 75.0 L338.0 75.3 L339.0 75.5 L340.0 75.5 L341.0 75.5 L342.0 75.5 L343.0 75.5 L344.0 75.3 L345.0 75.0 L346.0 74.5 L347.0 73.9 L348.0 73.2 L349.0 72.4 L350.0 71.5 L351.0 70.6 L352.0 69.5 L353.0 68.4 L354.0 67.2 L355.0 65.9 L356.0 64.6 L357.0 63.2 L358.0 61.7 L359.0 60.3 L360.0 58.8 L361.0 57.2 L362.0 55.7 L363.0 54.1 L364.0 52.5 L365.0 50.9 L366.0 49.4 L367.0 47.8 L368.0 46.3 L369.0 44.9 L370.0 43.4 L371.0 42.0 L372.0 40.7 L373.0 39.4 L374.0 38.2 L375.0 37.1 L376.0 36.0 L377.0 35.1 L378.0 34.2 L379.0 33.4 L380.0 32.7 L381.0 32.1 L382.0 31.6 L383.0 31.3 L384.0 31.1 L385.0 31.1 L386.0 31.1 L387.0 31.1 L388.0 31.1 L389.0 31.3 L390.0 31.6 L391.0 32.1 L392.0 32.7 L393.0 33.4 L394.0 34.2 L395.0 35.1 L396.0 36.0 L397.0 37.1 L398.0 38.2 L399.0 39.4 L400.0 40.7 L401.0 42.0 L402.0 43.4 L403.0 44.9 L404.0 46.3 L405.0 47.8 L406.0 49.4 L407.0 50.9 L408.0 52.5 L409.0 54.1 L410.0 55.7 L411.0 57.2 L412.0 58.8 L413.0 60.3 L414.0 61.7 L415.0 63.2 L416.0 64.6 L417.0 65.9 L418.0 67.2 L419.0 68.4 L420.0 69.5 L421.0 70.6 L422.0 71.5 L423.0 72.4 L424.0 73.2 L425.0 73.9 L426.0 74.5 L427.0 75.0 L428.0 75.3 L429.0 75.5 L430.0 75.5 L431.0 75.5 L432.0 75.5 L433.0 75.5 L434.0 75.3 L435.0 75.0 L436.0 74.5 L437.0 73.9 L438.0 73.2 L439.0 72.4 L440.0 71.5 L441.0 70.6 L442.0 69.5 L443.0 68.4 L444.0 67.2 L445.0 65.9 L446.0 64.6 L447.0 63.2 L448.0 61.7 L449.0 60.3 L450.0 58.8 L451.0 57.2 L452.0 55.7 L453.0 54.1 L454.0 52.5 L455.0 50.9 L456.0 49.4 L457.0 47.8 L458.0 46.3 L459.0 44.9 L460.0 43.4 L461.0 42.0 L462.0 40.7 L463.0 39.4 L464.0 38.2 L465.0 37.1 L466.0 36.0 L467.0 35.1 L468.0 34.2 L469.0 33.4 L470.0 32.7 L471.0 32.1 L472.0 31.6 L473.0 31.3 L474.0 31.1 L475.0 31.1 L476.0 31.1 L477.0 31.1 L478.0 31.1 L479.0 31.3 L480.0 31.6 L481.0 32.1 L482.0 32.7 L483.0 33.4 L484.0 34.2 L485.0 35.1 L486.0 36.0 L487.0 37.1 L488.0 38.2 L489.0 39.4 L490.0 40.7 L491.0 42.0 L492.0 43.4 L493.0 44.9 L494.0 46.3 L495.0 47.8 L496.0 49.4 L497.0 50.9 L498.0 52.5 L499.0 54.1 L500.0 55.7 L501.0 57.2 L502.0 58.8 L503.0 60.3 L504.0 61.7 L505.0 63.2 L506.0 64.6 L507.0 65.9 L508.0 67.2 L509.0 68.4 L510.0 69.5 L511.0 70.6 L512.0 71.5 L513.0 72.4 L514.0 73.2 L515.0 73.9 L516.0 74.5 L517.0 75.0 L518.0 75.3 L519.0 75.5 L520.0 75.5 L521.0 75.5 L522.0 75.5 L523.0 75.5 L524.0 75.3 L525.0 75.0 L526.0 74.5 L527.0 73.9 L528.0 73.2 L529.0 72.4 L530.0 71.5 L531.0 70.6 L532.0 69.5 L533.0 68.4 L534.0 67.2 L535.0 65.9 L536.0 64.6 L537.0 63.2 L538.0 61.7 L539.0 60.3 L540.0 58.8 L541.0 57.2 L542.0 55.7 L543.0 54.1 L544.0 52.5 L545.0 50.9 L546.0 49.4 L547.0 47.8 L548.0 46.3 L549.0 44.9 L550.0 43.4 L551.0 42.0 L552.0 40.7 L553.0 39.4 L554.0 38.2 L555.0 37.1 L556.0 36.0 L557.0 35.1 L558.0 34.2 L559.0 33.4 L560.0 32.7 L561.0 32.1 L562.0 31.6 L563.0 31.3 L564.0 31.1 L565.0 31.1 L566.0 31.1 L567.0 31.1 L568.0 31.1 L569.0 31.3 L570.0 31.6 L571.0 32.1 L572.0 32.7 L573.0 33.4 L574.0 34.2 L575.0 35.1 L576.0 36.0 L577.0 37.1 L578.0 38.2 L579.0 39.4 L580.0 40.7 L581.0 42.0 L582.0 43.4 L583.0 44.9 L584.0 46.3 L585.0 47.8 L586.0 49.4 L587.0 50.9 L588.0 52.5 L589.0 54.1 L590.0 55.7 L591.0 57.2 L592.0 58.8 L593.0 60.3 L594.0 61.7 L595.0 63.2 L596.0 64.6 L597.0 65.9 L598.0 67.2 L599.0 68.4 L600.0 69.5 L601.0 70.6 L602.0 71.5 L603.0 72.4 L604.0 73.2 L605.0 73.9 L606.0 74.5 L607.0 75.0 L608.0 75.3 L609.0 75.5 L610.0 75.5 L611.0 75.5 L612.0 75.5 L613.0 75.5 L614.0 75.3 L615.0 75.0 L616.0 74.5 L617.0 73.9 L618.0 73.2 L619.0 72.4 L620.0 71.5 L621.0 70.6 L622.0 69.5 L623.0 68.4 L624.0 67.2 L625.0 65.9 L626.0 64.6 L627.0 63.2 L628.0 61.7 L629.0 60.3 L630.0 58.8 L631.0 57.2 L632.0 55.7 L633.0 54.1 L634.0 52.5 L635.0 50.9 L636.0 49.4 L637.0 47.8 L638.0 46.3 L639.0 44.9 L640.0 43.4 L641.0 42.0 L642.0 40.7 L643.0 39.4 L644.0 38.2 L645.0 37.1 L646.0 36.0 L647.0 35.1 L648.0 34.2 L649.0 33.4 L650.0 32.7 L651.0 32.1 L652.0 31.6 L653.0 31.3 L654.0 31.1 L655.0 31.1 L656.0 31.1 L657.0 31.1 L658.0 31.1 L659.0 31.3 L660.0 31.6 L661.0 32.1 L662.0 32.7 L663.0 33.4 L664.0 34.2 L665.0 35.1 L666.0 36.0 L667.0 37.1 L668.0 38.2 L669.0 39.4 L670.0 40.7 L671.0 42.0 L672.0 43.4 L673.0 44.9 L674.0 46.3 L675.0 47.8 L676.0 49.4 L677.0 50.9 L678.0 52.5 L679.0 54.1 L680.0 55.7 L681.0 57.2 L682.0 58.8 L683.0 60.3 L684.0 61.7 L685.0 63.2 L686.0 64.6 L687.0 65.9 L688.0 67.2 L689.0 68.4 L690.0 69.5 L691.0 70.6 L692.0 71.5 L693.0 72.4 L694.0 73.2 L695.0 73.9 L696.0 74.5 L697.0 75.0 L698.0 75.3 L699.0 75.5 L700.0 75.5 L701.0 75.5 L702.0 75.5 L703.0 75.5 L704.0 75.3 L705.0 75.0 L706.0 74.5 L707.0 73.9" fill="none" stroke="#eeec74" stroke-width="1.8" stroke-linejoin="round"/><path d="M26.0 143.5 L27.0 143.5 L28.0 143.5 L29.0 143.7 L30.0 144.0 L31.0 144.5 L32.0 145.1 L33.0 145.8 L34.0 146.6 L35.0 147.5 L36.0 148.4 L37.0 149.5 L38.0 150.6 L39.0 151.8 L40.0 153.1 L41.0 154.4 L42.0 155.8 L43.0 157.3 L44.0 158.7 L45.0 160.2 L46.0 161.8 L47.0 163.3 L48.0 164.9 L49.0 166.5 L50.0 168.1 L51.0 169.6 L52.0 171.2 L53.0 172.7 L54.0 174.1 L55.0 175.6 L56.0 177.0 L57.0 178.3 L58.0 179.6 L59.0 180.8 L60.0 181.9 L61.0 183.0 L62.0 183.9 L63.0 184.8 L64.0 185.6 L65.0 186.3 L66.0 186.9 L67.0 187.4 L68.0 187.7 L69.0 187.9 L70.0 187.9 L71.0 187.9 L72.0 187.9 L73.0 187.9 L74.0 187.7 L75.0 187.4 L76.0 186.9 L77.0 186.3 L78.0 185.6 L79.0 184.8 L80.0 183.9 L81.0 183.0 L82.0 181.9 L83.0 180.8 L84.0 179.6 L85.0 178.3 L86.0 177.0 L87.0 175.6 L88.0 174.1 L89.0 172.7 L90.0 171.2 L91.0 169.6 L92.0 168.1 L93.0 166.5 L94.0 164.9 L95.0 163.3 L96.0 161.8 L97.0 160.2 L98.0 158.7 L99.0 157.3 L100.0 155.8 L101.0 154.4 L102.0 153.1 L103.0 151.8 L104.0 150.6 L105.0 149.5 L106.0 148.4 L107.0 147.5 L108.0 146.6 L109.0 145.8 L110.0 145.1 L111.0 144.5 L112.0 144.0 L113.0 143.7 L114.0 143.5 L115.0 143.5 L116.0 143.5 L117.0 143.5 L118.0 143.5 L119.0 143.7 L120.0 144.0 L121.0 144.5 L122.0 145.1 L123.0 145.8 L124.0 146.6 L125.0 147.5 L126.0 148.4 L127.0 149.5 L128.0 150.6 L129.0 151.8 L130.0 153.1 L131.0 154.4 L132.0 155.8 L133.0 157.3 L134.0 158.7 L135.0 160.2 L136.0 161.8 L137.0 163.3 L138.0 164.9 L139.0 166.5 L140.0 168.1 L141.0 169.6 L142.0 171.2 L143.0 172.7 L144.0 174.1 L145.0 175.6 L146.0 177.0 L147.0 178.3 L148.0 179.6 L149.0 180.8 L150.0 181.9 L151.0 183.0 L152.0 183.9 L153.0 184.8 L154.0 185.6 L155.0 186.3 L156.0 186.9 L157.0 187.4 L158.0 187.7 L159.0 187.9 L160.0 187.9 L161.0 187.9 L162.0 187.9 L163.0 187.9 L164.0 187.7 L165.0 187.4 L166.0 186.9 L167.0 186.3 L168.0 185.6 L169.0 184.8 L170.0 183.9 L171.0 183.0 L172.0 181.9 L173.0 180.8 L174.0 179.6 L175.0 178.3 L176.0 177.0 L177.0 175.6 L178.0 174.1 L179.0 172.7 L180.0 171.2 L181.0 169.6 L182.0 168.1 L183.0 166.5 L184.0 164.9 L185.0 163.3 L186.0 161.8 L187.0 160.2 L188.0 158.7 L189.0 157.3 L190.0 155.8 L191.0 154.4 L192.0 153.1 L193.0 151.8 L194.0 150.6 L195.0 149.5 L196.0 148.4 L197.0 147.5 L198.0 146.6 L199.0 145.8 L200.0 145.1 L201.0 144.5 L202.0 144.0 L203.0 143.7 L204.0 143.5 L205.0 143.5 L206.0 143.5 L207.0 143.5 L208.0 143.5 L209.0 143.7 L210.0 144.0 L211.0 144.5 L212.0 145.1 L213.0 145.8 L214.0 146.6 L215.0 147.5 L216.0 148.4 L217.0 149.5 L218.0 150.6 L219.0 151.8 L220.0 153.1 L221.0 154.4 L222.0 155.8 L223.0 157.3 L224.0 158.7 L225.0 160.2 L226.0 161.8 L227.0 163.3 L228.0 164.9 L229.0 166.5 L230.0 168.1 L231.0 169.6 L232.0 171.2 L233.0 172.7 L234.0 174.1 L235.0 175.6 L236.0 177.0 L237.0 178.3 L238.0 179.6 L239.0 180.8 L240.0 181.9 L241.0 183.0 L242.0 183.9 L243.0 184.8 L244.0 185.6 L245.0 186.3 L246.0 186.9 L247.0 187.4 L248.0 187.7 L249.0 187.9 L250.0 187.9 L251.0 187.9 L252.0 187.9 L253.0 187.9 L254.0 187.7 L255.0 187.4 L256.0 186.9 L257.0 186.3 L258.0 185.6 L259.0 184.8 L260.0 183.9 L261.0 183.0 L262.0 181.9 L263.0 180.8 L264.0 179.6 L265.0 178.3 L266.0 177.0 L267.0 175.6 L268.0 174.1 L269.0 172.7 L270.0 171.2 L271.0 169.6 L272.0 168.1 L273.0 166.5 L274.0 164.9 L275.0 163.3 L276.0 161.8 L277.0 160.2 L278.0 158.7 L279.0 157.3 L280.0 155.8 L281.0 154.4 L282.0 153.1 L283.0 151.8 L284.0 150.6 L285.0 149.5 L286.0 148.4 L287.0 147.5 L288.0 146.6 L289.0 145.8 L290.0 145.1 L291.0 144.5 L292.0 144.0 L293.0 143.7 L294.0 143.5 L295.0 143.5 L296.0 143.5 L297.0 143.5 L298.0 143.5 L299.0 143.7 L300.0 144.0 L301.0 144.5 L302.0 145.1 L303.0 145.8 L304.0 146.6 L305.0 147.5 L306.0 148.4 L307.0 149.5 L308.0 150.6 L309.0 151.8 L310.0 153.1 L311.0 154.4 L312.0 155.8 L313.0 157.3 L314.0 158.7 L315.0 160.2 L316.0 161.8 L317.0 163.3 L318.0 164.9 L319.0 166.5 L320.0 168.1 L321.0 169.6 L322.0 171.2 L323.0 172.7 L324.0 174.1 L325.0 175.6 L326.0 177.0 L327.0 178.3 L328.0 179.6 L329.0 180.8 L330.0 181.9 L331.0 183.0 L332.0 183.9 L333.0 184.8 L334.0 185.6 L335.0 186.3 L336.0 186.9 L337.0 187.4 L338.0 187.7 L339.0 187.9 L340.0 187.9 L341.0 187.9 L342.0 187.9 L343.0 187.9 L344.0 187.7 L345.0 187.4 L346.0 186.9 L347.0 186.3 L348.0 185.6 L349.0 184.8 L350.0 183.9 L351.0 183.0 L352.0 181.9 L353.0 180.8 L354.0 179.6 L355.0 178.3 L356.0 177.0 L357.0 175.6 L358.0 174.1 L359.0 172.7 L360.0 171.2 L361.0 169.6 L362.0 168.1 L363.0 166.5 L364.0 164.9 L365.0 163.3 L366.0 161.8 L367.0 160.2 L368.0 158.7 L369.0 157.3 L370.0 155.8 L371.0 154.4 L372.0 153.1 L373.0 151.8 L374.0 150.6 L375.0 149.5 L376.0 148.4 L377.0 147.5 L378.0 146.6 L379.0 145.8 L380.0 145.1 L381.0 144.5 L382.0 144.0 L383.0 143.7 L384.0 143.5 L385.0 143.5 L386.0 143.5 L387.0 143.5 L388.0 143.5 L389.0 143.7 L390.0 144.0 L391.0 144.5 L392.0 145.1 L393.0 145.8 L394.0 146.6 L395.0 147.5 L396.0 148.4 L397.0 149.5 L398.0 150.6 L399.0 151.8 L400.0 153.1 L401.0 154.4 L402.0 155.8 L403.0 157.3 L404.0 158.7 L405.0 160.2 L406.0 161.8 L407.0 163.3 L408.0 164.9 L409.0 166.5 L410.0 168.1 L411.0 169.6 L412.0 171.2 L413.0 172.7 L414.0 174.1 L415.0 175.6 L416.0 177.0 L417.0 178.3 L418.0 179.6 L419.0 180.8 L420.0 181.9 L421.0 183.0 L422.0 183.9 L423.0 184.8 L424.0 185.6 L425.0 186.3 L426.0 186.9 L427.0 187.4 L428.0 187.7 L429.0 187.9 L430.0 187.9 L431.0 187.9 L432.0 187.9 L433.0 187.9 L434.0 187.7 L435.0 187.4 L436.0 186.9 L437.0 186.3 L438.0 185.6 L439.0 184.8 L440.0 183.9 L441.0 183.0 L442.0 181.9 L443.0 180.8 L444.0 179.6 L445.0 178.3 L446.0 177.0 L447.0 175.6 L448.0 174.1 L449.0 172.7 L450.0 171.2 L451.0 169.6 L452.0 168.1 L453.0 166.5 L454.0 164.9 L455.0 163.3 L456.0 161.8 L457.0 160.2 L458.0 158.7 L459.0 157.3 L460.0 155.8 L461.0 154.4 L462.0 153.1 L463.0 151.8 L464.0 150.6 L465.0 149.5 L466.0 148.4 L467.0 147.5 L468.0 146.6 L469.0 145.8 L470.0 145.1 L471.0 144.5 L472.0 144.0 L473.0 143.7 L474.0 143.5 L475.0 143.5 L476.0 143.5 L477.0 143.5 L478.0 143.5 L479.0 143.7 L480.0 144.0 L481.0 144.5 L482.0 145.1 L483.0 145.8 L484.0 146.6 L485.0 147.5 L486.0 148.4 L487.0 149.5 L488.0 150.6 L489.0 151.8 L490.0 153.1 L491.0 154.4 L492.0 155.8 L493.0 157.3 L494.0 158.7 L495.0 160.2 L496.0 161.8 L497.0 163.3 L498.0 164.9 L499.0 166.5 L500.0 168.1 L501.0 169.6 L502.0 171.2 L503.0 172.7 L504.0 174.1 L505.0 175.6 L506.0 177.0 L507.0 178.3 L508.0 179.6 L509.0 180.8 L510.0 181.9 L511.0 183.0 L512.0 183.9 L513.0 184.8 L514.0 185.6 L515.0 186.3 L516.0 186.9 L517.0 187.4 L518.0 187.7 L519.0 187.9 L520.0 187.9 L521.0 187.9 L522.0 187.9 L523.0 187.9 L524.0 187.7 L525.0 187.4 L526.0 186.9 L527.0 186.3 L528.0 185.6 L529.0 184.8 L530.0 183.9 L531.0 183.0 L532.0 181.9 L533.0 180.8 L534.0 179.6 L535.0 178.3 L536.0 177.0 L537.0 175.6 L538.0 174.1 L539.0 172.7 L540.0 171.2 L541.0 169.6 L542.0 168.1 L543.0 166.5 L544.0 164.9 L545.0 163.3 L546.0 161.8 L547.0 160.2 L548.0 158.7 L549.0 157.3 L550.0 155.8 L551.0 154.4 L552.0 153.1 L553.0 151.8 L554.0 150.6 L555.0 149.5 L556.0 148.4 L557.0 147.5 L558.0 146.6 L559.0 145.8 L560.0 145.1 L561.0 144.5 L562.0 144.0 L563.0 143.7 L564.0 143.5 L565.0 143.5 L566.0 143.5 L567.0 143.5 L568.0 143.5 L569.0 143.7 L570.0 144.0 L571.0 144.5 L572.0 145.1 L573.0 145.8 L574.0 146.6 L575.0 147.5 L576.0 148.4 L577.0 149.5 L578.0 150.6 L579.0 151.8 L580.0 153.1 L581.0 154.4 L582.0 155.8 L583.0 157.3 L584.0 158.7 L585.0 160.2 L586.0 161.8 L587.0 163.3 L588.0 164.9 L589.0 166.5 L590.0 168.1 L591.0 169.6 L592.0 171.2 L593.0 172.7 L594.0 174.1 L595.0 175.6 L596.0 177.0 L597.0 178.3 L598.0 179.6 L599.0 180.8 L600.0 181.9 L601.0 183.0 L602.0 183.9 L603.0 184.8 L604.0 185.6 L605.0 186.3 L606.0 186.9 L607.0 187.4 L608.0 187.7 L609.0 187.9 L610.0 187.9 L611.0 187.9 L612.0 187.9 L613.0 187.9 L614.0 187.7 L615.0 187.4 L616.0 186.9 L617.0 186.3 L618.0 185.6 L619.0 184.8 L620.0 183.9 L621.0 183.0 L622.0 181.9 L623.0 180.8 L624.0 179.6 L625.0 178.3 L626.0 177.0 L627.0 175.6 L628.0 174.1 L629.0 172.7 L630.0 171.2 L631.0 169.6 L632.0 168.1 L633.0 166.5 L634.0 164.9 L635.0 163.3 L636.0 161.8 L637.0 160.2 L638.0 158.7 L639.0 157.3 L640.0 155.8 L641.0 154.4 L642.0 153.1 L643.0 151.8 L644.0 150.6 L645.0 149.5 L646.0 148.4 L647.0 147.5 L648.0 146.6 L649.0 145.8 L650.0 145.1 L651.0 144.5 L652.0 144.0 L653.0 143.7 L654.0 143.5 L655.0 143.5 L656.0 143.5 L657.0 143.5 L658.0 143.5 L659.0 143.7 L660.0 144.0 L661.0 144.5 L662.0 145.1 L663.0 145.8 L664.0 146.6 L665.0 147.5 L666.0 148.4 L667.0 149.5 L668.0 150.6 L669.0 151.8 L670.0 153.1 L671.0 154.4 L672.0 155.8 L673.0 157.3 L674.0 158.7 L675.0 160.2 L676.0 161.8 L677.0 163.3 L678.0 164.9 L679.0 166.5 L680.0 168.1 L681.0 169.6 L682.0 171.2 L683.0 172.7 L684.0 174.1 L685.0 175.6 L686.0 177.0 L687.0 178.3 L688.0 179.6 L689.0 180.8 L690.0 181.9 L691.0 183.0 L692.0 183.9 L693.0 184.8 L694.0 185.6 L695.0 186.3 L696.0 186.9 L697.0 187.4 L698.0 187.7 L699.0 187.9 L700.0 187.9 L701.0 187.9 L702.0 187.9 L703.0 187.9 L704.0 187.7 L705.0 187.4 L706.0 186.9 L707.0 186.3" fill="none" stroke="#05060c" stroke-opacity=".75" stroke-width="3.6" stroke-linejoin="round"/><path d="M26.0 143.5 L27.0 143.5 L28.0 143.5 L29.0 143.7 L30.0 144.0 L31.0 144.5 L32.0 145.1 L33.0 145.8 L34.0 146.6 L35.0 147.5 L36.0 148.4 L37.0 149.5 L38.0 150.6 L39.0 151.8 L40.0 153.1 L41.0 154.4 L42.0 155.8 L43.0 157.3 L44.0 158.7 L45.0 160.2 L46.0 161.8 L47.0 163.3 L48.0 164.9 L49.0 166.5 L50.0 168.1 L51.0 169.6 L52.0 171.2 L53.0 172.7 L54.0 174.1 L55.0 175.6 L56.0 177.0 L57.0 178.3 L58.0 179.6 L59.0 180.8 L60.0 181.9 L61.0 183.0 L62.0 183.9 L63.0 184.8 L64.0 185.6 L65.0 186.3 L66.0 186.9 L67.0 187.4 L68.0 187.7 L69.0 187.9 L70.0 187.9 L71.0 187.9 L72.0 187.9 L73.0 187.9 L74.0 187.7 L75.0 187.4 L76.0 186.9 L77.0 186.3 L78.0 185.6 L79.0 184.8 L80.0 183.9 L81.0 183.0 L82.0 181.9 L83.0 180.8 L84.0 179.6 L85.0 178.3 L86.0 177.0 L87.0 175.6 L88.0 174.1 L89.0 172.7 L90.0 171.2 L91.0 169.6 L92.0 168.1 L93.0 166.5 L94.0 164.9 L95.0 163.3 L96.0 161.8 L97.0 160.2 L98.0 158.7 L99.0 157.3 L100.0 155.8 L101.0 154.4 L102.0 153.1 L103.0 151.8 L104.0 150.6 L105.0 149.5 L106.0 148.4 L107.0 147.5 L108.0 146.6 L109.0 145.8 L110.0 145.1 L111.0 144.5 L112.0 144.0 L113.0 143.7 L114.0 143.5 L115.0 143.5 L116.0 143.5 L117.0 143.5 L118.0 143.5 L119.0 143.7 L120.0 144.0 L121.0 144.5 L122.0 145.1 L123.0 145.8 L124.0 146.6 L125.0 147.5 L126.0 148.4 L127.0 149.5 L128.0 150.6 L129.0 151.8 L130.0 153.1 L131.0 154.4 L132.0 155.8 L133.0 157.3 L134.0 158.7 L135.0 160.2 L136.0 161.8 L137.0 163.3 L138.0 164.9 L139.0 166.5 L140.0 168.1 L141.0 169.6 L142.0 171.2 L143.0 172.7 L144.0 174.1 L145.0 175.6 L146.0 177.0 L147.0 178.3 L148.0 179.6 L149.0 180.8 L150.0 181.9 L151.0 183.0 L152.0 183.9 L153.0 184.8 L154.0 185.6 L155.0 186.3 L156.0 186.9 L157.0 187.4 L158.0 187.7 L159.0 187.9 L160.0 187.9 L161.0 187.9 L162.0 187.9 L163.0 187.9 L164.0 187.7 L165.0 187.4 L166.0 186.9 L167.0 186.3 L168.0 185.6 L169.0 184.8 L170.0 183.9 L171.0 183.0 L172.0 181.9 L173.0 180.8 L174.0 179.6 L175.0 178.3 L176.0 177.0 L177.0 175.6 L178.0 174.1 L179.0 172.7 L180.0 171.2 L181.0 169.6 L182.0 168.1 L183.0 166.5 L184.0 164.9 L185.0 163.3 L186.0 161.8 L187.0 160.2 L188.0 158.7 L189.0 157.3 L190.0 155.8 L191.0 154.4 L192.0 153.1 L193.0 151.8 L194.0 150.6 L195.0 149.5 L196.0 148.4 L197.0 147.5 L198.0 146.6 L199.0 145.8 L200.0 145.1 L201.0 144.5 L202.0 144.0 L203.0 143.7 L204.0 143.5 L205.0 143.5 L206.0 143.5 L207.0 143.5 L208.0 143.5 L209.0 143.7 L210.0 144.0 L211.0 144.5 L212.0 145.1 L213.0 145.8 L214.0 146.6 L215.0 147.5 L216.0 148.4 L217.0 149.5 L218.0 150.6 L219.0 151.8 L220.0 153.1 L221.0 154.4 L222.0 155.8 L223.0 157.3 L224.0 158.7 L225.0 160.2 L226.0 161.8 L227.0 163.3 L228.0 164.9 L229.0 166.5 L230.0 168.1 L231.0 169.6 L232.0 171.2 L233.0 172.7 L234.0 174.1 L235.0 175.6 L236.0 177.0 L237.0 178.3 L238.0 179.6 L239.0 180.8 L240.0 181.9 L241.0 183.0 L242.0 183.9 L243.0 184.8 L244.0 185.6 L245.0 186.3 L246.0 186.9 L247.0 187.4 L248.0 187.7 L249.0 187.9 L250.0 187.9 L251.0 187.9 L252.0 187.9 L253.0 187.9 L254.0 187.7 L255.0 187.4 L256.0 186.9 L257.0 186.3 L258.0 185.6 L259.0 184.8 L260.0 183.9 L261.0 183.0 L262.0 181.9 L263.0 180.8 L264.0 179.6 L265.0 178.3 L266.0 177.0 L267.0 175.6 L268.0 174.1 L269.0 172.7 L270.0 171.2 L271.0 169.6 L272.0 168.1 L273.0 166.5 L274.0 164.9 L275.0 163.3 L276.0 161.8 L277.0 160.2 L278.0 158.7 L279.0 157.3 L280.0 155.8 L281.0 154.4 L282.0 153.1 L283.0 151.8 L284.0 150.6 L285.0 149.5 L286.0 148.4 L287.0 147.5 L288.0 146.6 L289.0 145.8 L290.0 145.1 L291.0 144.5 L292.0 144.0 L293.0 143.7 L294.0 143.5 L295.0 143.5 L296.0 143.5 L297.0 143.5 L298.0 143.5 L299.0 143.7 L300.0 144.0 L301.0 144.5 L302.0 145.1 L303.0 145.8 L304.0 146.6 L305.0 147.5 L306.0 148.4 L307.0 149.5 L308.0 150.6 L309.0 151.8 L310.0 153.1 L311.0 154.4 L312.0 155.8 L313.0 157.3 L314.0 158.7 L315.0 160.2 L316.0 161.8 L317.0 163.3 L318.0 164.9 L319.0 166.5 L320.0 168.1 L321.0 169.6 L322.0 171.2 L323.0 172.7 L324.0 174.1 L325.0 175.6 L326.0 177.0 L327.0 178.3 L328.0 179.6 L329.0 180.8 L330.0 181.9 L331.0 183.0 L332.0 183.9 L333.0 184.8 L334.0 185.6 L335.0 186.3 L336.0 186.9 L337.0 187.4 L338.0 187.7 L339.0 187.9 L340.0 187.9 L341.0 187.9 L342.0 187.9 L343.0 187.9 L344.0 187.7 L345.0 187.4 L346.0 186.9 L347.0 186.3 L348.0 185.6 L349.0 184.8 L350.0 183.9 L351.0 183.0 L352.0 181.9 L353.0 180.8 L354.0 179.6 L355.0 178.3 L356.0 177.0 L357.0 175.6 L358.0 174.1 L359.0 172.7 L360.0 171.2 L361.0 169.6 L362.0 168.1 L363.0 166.5 L364.0 164.9 L365.0 163.3 L366.0 161.8 L367.0 160.2 L368.0 158.7 L369.0 157.3 L370.0 155.8 L371.0 154.4 L372.0 153.1 L373.0 151.8 L374.0 150.6 L375.0 149.5 L376.0 148.4 L377.0 147.5 L378.0 146.6 L379.0 145.8 L380.0 145.1 L381.0 144.5 L382.0 144.0 L383.0 143.7 L384.0 143.5 L385.0 143.5 L386.0 143.5 L387.0 143.5 L388.0 143.5 L389.0 143.7 L390.0 144.0 L391.0 144.5 L392.0 145.1 L393.0 145.8 L394.0 146.6 L395.0 147.5 L396.0 148.4 L397.0 149.5 L398.0 150.6 L399.0 151.8 L400.0 153.1 L401.0 154.4 L402.0 155.8 L403.0 157.3 L404.0 158.7 L405.0 160.2 L406.0 161.8 L407.0 163.3 L408.0 164.9 L409.0 166.5 L410.0 168.1 L411.0 169.6 L412.0 171.2 L413.0 172.7 L414.0 174.1 L415.0 175.6 L416.0 177.0 L417.0 178.3 L418.0 179.6 L419.0 180.8 L420.0 181.9 L421.0 183.0 L422.0 183.9 L423.0 184.8 L424.0 185.6 L425.0 186.3 L426.0 186.9 L427.0 187.4 L428.0 187.7 L429.0 187.9 L430.0 187.9 L431.0 187.9 L432.0 187.9 L433.0 187.9 L434.0 187.7 L435.0 187.4 L436.0 186.9 L437.0 186.3 L438.0 185.6 L439.0 184.8 L440.0 183.9 L441.0 183.0 L442.0 181.9 L443.0 180.8 L444.0 179.6 L445.0 178.3 L446.0 177.0 L447.0 175.6 L448.0 174.1 L449.0 172.7 L450.0 171.2 L451.0 169.6 L452.0 168.1 L453.0 166.5 L454.0 164.9 L455.0 163.3 L456.0 161.8 L457.0 160.2 L458.0 158.7 L459.0 157.3 L460.0 155.8 L461.0 154.4 L462.0 153.1 L463.0 151.8 L464.0 150.6 L465.0 149.5 L466.0 148.4 L467.0 147.5 L468.0 146.6 L469.0 145.8 L470.0 145.1 L471.0 144.5 L472.0 144.0 L473.0 143.7 L474.0 143.5 L475.0 143.5 L476.0 143.5 L477.0 143.5 L478.0 143.5 L479.0 143.7 L480.0 144.0 L481.0 144.5 L482.0 145.1 L483.0 145.8 L484.0 146.6 L485.0 147.5 L486.0 148.4 L487.0 149.5 L488.0 150.6 L489.0 151.8 L490.0 153.1 L491.0 154.4 L492.0 155.8 L493.0 157.3 L494.0 158.7 L495.0 160.2 L496.0 161.8 L497.0 163.3 L498.0 164.9 L499.0 166.5 L500.0 168.1 L501.0 169.6 L502.0 171.2 L503.0 172.7 L504.0 174.1 L505.0 175.6 L506.0 177.0 L507.0 178.3 L508.0 179.6 L509.0 180.8 L510.0 181.9 L511.0 183.0 L512.0 183.9 L513.0 184.8 L514.0 185.6 L515.0 186.3 L516.0 186.9 L517.0 187.4 L518.0 187.7 L519.0 187.9 L520.0 187.9 L521.0 187.9 L522.0 187.9 L523.0 187.9 L524.0 187.7 L525.0 187.4 L526.0 186.9 L527.0 186.3 L528.0 185.6 L529.0 184.8 L530.0 183.9 L531.0 183.0 L532.0 181.9 L533.0 180.8 L534.0 179.6 L535.0 178.3 L536.0 177.0 L537.0 175.6 L538.0 174.1 L539.0 172.7 L540.0 171.2 L541.0 169.6 L542.0 168.1 L543.0 166.5 L544.0 164.9 L545.0 163.3 L546.0 161.8 L547.0 160.2 L548.0 158.7 L549.0 157.3 L550.0 155.8 L551.0 154.4 L552.0 153.1 L553.0 151.8 L554.0 150.6 L555.0 149.5 L556.0 148.4 L557.0 147.5 L558.0 146.6 L559.0 145.8 L560.0 145.1 L561.0 144.5 L562.0 144.0 L563.0 143.7 L564.0 143.5 L565.0 143.5 L566.0 143.5 L567.0 143.5 L568.0 143.5 L569.0 143.7 L570.0 144.0 L571.0 144.5 L572.0 145.1 L573.0 145.8 L574.0 146.6 L575.0 147.5 L576.0 148.4 L577.0 149.5 L578.0 150.6 L579.0 151.8 L580.0 153.1 L581.0 154.4 L582.0 155.8 L583.0 157.3 L584.0 158.7 L585.0 160.2 L586.0 161.8 L587.0 163.3 L588.0 164.9 L589.0 166.5 L590.0 168.1 L591.0 169.6 L592.0 171.2 L593.0 172.7 L594.0 174.1 L595.0 175.6 L596.0 177.0 L597.0 178.3 L598.0 179.6 L599.0 180.8 L600.0 181.9 L601.0 183.0 L602.0 183.9 L603.0 184.8 L604.0 185.6 L605.0 186.3 L606.0 186.9 L607.0 187.4 L608.0 187.7 L609.0 187.9 L610.0 187.9 L611.0 187.9 L612.0 187.9 L613.0 187.9 L614.0 187.7 L615.0 187.4 L616.0 186.9 L617.0 186.3 L618.0 185.6 L619.0 184.8 L620.0 183.9 L621.0 183.0 L622.0 181.9 L623.0 180.8 L624.0 179.6 L625.0 178.3 L626.0 177.0 L627.0 175.6 L628.0 174.1 L629.0 172.7 L630.0 171.2 L631.0 169.6 L632.0 168.1 L633.0 166.5 L634.0 164.9 L635.0 163.3 L636.0 161.8 L637.0 160.2 L638.0 158.7 L639.0 157.3 L640.0 155.8 L641.0 154.4 L642.0 153.1 L643.0 151.8 L644.0 150.6 L645.0 149.5 L646.0 148.4 L647.0 147.5 L648.0 146.6 L649.0 145.8 L650.0 145.1 L651.0 144.5 L652.0 144.0 L653.0 143.7 L654.0 143.5 L655.0 143.5 L656.0 143.5 L657.0 143.5 L658.0 143.5 L659.0 143.7 L660.0 144.0 L661.0 144.5 L662.0 145.1 L663.0 145.8 L664.0 146.6 L665.0 147.5 L666.0 148.4 L667.0 149.5 L668.0 150.6 L669.0 151.8 L670.0 153.1 L671.0 154.4 L672.0 155.8 L673.0 157.3 L674.0 158.7 L675.0 160.2 L676.0 161.8 L677.0 163.3 L678.0 164.9 L679.0 166.5 L680.0 168.1 L681.0 169.6 L682.0 171.2 L683.0 172.7 L684.0 174.1 L685.0 175.6 L686.0 177.0 L687.0 178.3 L688.0 179.6 L689.0 180.8 L690.0 181.9 L691.0 183.0 L692.0 183.9 L693.0 184.8 L694.0 185.6 L695.0 186.3 L696.0 186.9 L697.0 187.4 L698.0 187.7 L699.0 187.9 L700.0 187.9 L701.0 187.9 L702.0 187.9 L703.0 187.9 L704.0 187.7 L705.0 187.4 L706.0 186.9 L707.0 186.3" fill="none" stroke="#b4b8f0" stroke-width="1.8" stroke-linejoin="round"/><path d="M26.0 316.3 L57.6 316.3 L57.6 293.4 L58.5 293.4 L58.5 270.5 L103.5 270.5 L103.5 293.4 L104.4 293.4 L104.4 316.3 L147.6 316.3 L147.6 293.4 L148.5 293.4 L148.5 270.5 L193.5 270.5 L193.5 293.4 L194.4 293.4 L194.4 316.3 L237.6 316.3 L237.6 293.4 L238.5 293.4 L238.5 270.5 L283.5 270.5 L283.5 293.4 L284.4 293.4 L284.4 316.3 L327.6 316.3 L327.6 293.4 L328.5 293.4 L328.5 270.5 L373.5 270.5 L373.5 293.4 L374.4 293.4 L374.4 316.3 L417.6 316.3 L417.6 293.4 L418.5 293.4 L418.5 270.5 L463.5 270.5 L463.5 293.4 L464.4 293.4 L464.4 316.3 L507.6 316.3 L507.6 293.4 L508.5 293.4 L508.5 270.5 L553.5 270.5 L553.5 293.4 L554.4 293.4 L554.4 316.3 L597.6 316.3 L597.6 293.4 L598.5 293.4 L598.5 270.5 L643.5 270.5 L643.5 293.4 L644.4 293.4 L644.4 316.3 L687.6 316.3 L687.6 293.4 L688.5 293.4 L688.5 270.5 L707.0 270.5" fill="none" stroke="#05060c" stroke-opacity=".75" stroke-width="3.4"/><path d="M26.0 316.3 L57.6 316.3 L57.6 293.4 L58.5 293.4 L58.5 270.5 L103.5 270.5 L103.5 293.4 L104.4 293.4 L104.4 316.3 L147.6 316.3 L147.6 293.4 L148.5 293.4 L148.5 270.5 L193.5 270.5 L193.5 293.4 L194.4 293.4 L194.4 316.3 L237.6 316.3 L237.6 293.4 L238.5 293.4 L238.5 270.5 L283.5 270.5 L283.5 293.4 L284.4 293.4 L284.4 316.3 L327.6 316.3 L327.6 293.4 L328.5 293.4 L328.5 270.5 L373.5 270.5 L373.5 293.4 L374.4 293.4 L374.4 316.3 L417.6 316.3 L417.6 293.4 L418.5 293.4 L418.5 270.5 L463.5 270.5 L463.5 293.4 L464.4 293.4 L464.4 316.3 L507.6 316.3 L507.6 293.4 L508.5 293.4 L508.5 270.5 L553.5 270.5 L553.5 293.4 L554.4 293.4 L554.4 316.3 L597.6 316.3 L597.6 293.4 L598.5 293.4 L598.5 270.5 L643.5 270.5 L643.5 293.4 L644.4 293.4 L644.4 316.3 L687.6 316.3 L687.6 293.4 L688.5 293.4 L688.5 270.5 L707.0 270.5" fill="none" stroke="#ea9048" stroke-width="1.7"/><path d="M26.0 412.3 L57.6 412.3 L57.6 389.6 L58.5 389.6 L58.5 366.8 L103.5 366.8 L103.5 389.6 L104.4 389.6 L104.4 412.3 L147.6 412.3 L147.6 389.6 L148.5 389.6 L148.5 366.8 L193.5 366.8 L193.5 389.6 L194.4 389.6 L194.4 412.3 L237.6 412.3 L237.6 389.6 L238.5 389.6 L238.5 366.8 L283.5 366.8 L283.5 389.6 L284.4 389.6 L284.4 412.3 L327.6 412.3 L327.6 389.6 L328.5 389.6 L328.5 366.8 L373.5 366.8 L373.5 389.6 L374.4 389.6 L374.4 412.3 L417.6 412.3 L417.6 389.6 L418.5 389.6 L418.5 366.8 L463.5 366.8 L463.5 389.6 L464.4 389.6 L464.4 412.3 L507.6 412.3 L507.6 389.6 L508.5 389.6 L508.5 366.8 L553.5 366.8 L553.5 389.6 L554.4 389.6 L554.4 412.3 L597.6 412.3 L597.6 389.6 L598.5 389.6 L598.5 366.8 L643.5 366.8 L643.5 389.6 L644.4 389.6 L644.4 412.3 L687.6 412.3 L687.6 389.6 L688.5 389.6 L688.5 366.8 L707.0 366.8" fill="none" stroke="#05060c" stroke-opacity=".75" stroke-width="3.4"/><path d="M26.0 412.3 L57.6 412.3 L57.6 389.6 L58.5 389.6 L58.5 366.8 L103.5 366.8 L103.5 389.6 L104.4 389.6 L104.4 412.3 L147.6 412.3 L147.6 389.6 L148.5 389.6 L148.5 366.8 L193.5 366.8 L193.5 389.6 L194.4 389.6 L194.4 412.3 L237.6 412.3 L237.6 389.6 L238.5 389.6 L238.5 366.8 L283.5 366.8 L283.5 389.6 L284.4 389.6 L284.4 412.3 L327.6 412.3 L327.6 389.6 L328.5 389.6 L328.5 366.8 L373.5 366.8 L373.5 389.6 L374.4 389.6 L374.4 412.3 L417.6 412.3 L417.6 389.6 L418.5 389.6 L418.5 366.8 L463.5 366.8 L463.5 389.6 L464.4 389.6 L464.4 412.3 L507.6 412.3 L507.6 389.6 L508.5 389.6 L508.5 366.8 L553.5 366.8 L553.5 389.6 L554.4 389.6 L554.4 412.3 L597.6 412.3 L597.6 389.6 L598.5 389.6 L598.5 366.8 L643.5 366.8 L643.5 389.6 L644.4 389.6 L644.4 412.3 L687.6 412.3 L687.6 389.6 L688.5 389.6 L688.5 366.8 L707.0 366.8" fill="none" stroke="#a4f04c" stroke-width="1.7"/><path d="M0 45.2H17L24.200000000000003 53.30000000000001L17 61.400000000000006H0Z" fill="#f2ee46"/><text x="2" y="57.60000000000002" font-family="Liberation Sans" font-size="12.3" font-style="italic" fill="#1a1a10">CH1</text><path d="M0 157H17L24.200000000000003 165.25L17 173.5H0Z" fill="#b6bcf2"/><text x="0.5" y="169.55" font-family="Liberation Sans" font-size="11.8" fill="#141838">CH2</text><path d="M0 285.2H17L24.200000000000003 293.4L17 301.6H0Z" fill="#ea8a3e"/><text x="0.5" y="297.7" font-family="Liberation Sans" font-size="11.8" fill="#3a1a08">CH3</text><path d="M0 381H17L24.200000000000003 389.2L17 397.4H0Z" fill="#a6f24e"/><text x="0.5" y="393.5" font-family="Liberation Sans" font-size="11.8" fill="#0e2a08">CH4</text></svg>
<!-- slider -->
<div class="a" style="left:737px;top:84px;width:1px;height:437px;background:#8c8c8c"></div>
<div class="a" style="left:738px;top:84px;width:2px;height:437px;background:#fff"></div>
<div class="a" style="left:728px;top:257px;width:21px;height:11px;border:1px solid #7f7f7f;border-radius:2px;background:linear-gradient(#f3f3f3,#dadada)"></div>
<div class="a" style="left:723px;top:89px;width:4px;height:1px;background:#b4b4b4"></div><div class="a" style="left:751px;top:89px;width:4px;height:1px;background:#b4b4b4"></div><div class="a" style="left:723px;top:196px;width:4px;height:1px;background:#b4b4b4"></div><div class="a" style="left:751px;top:196px;width:4px;height:1px;background:#b4b4b4"></div><div class="a" style="left:723px;top:302px;width:4px;height:1px;background:#b4b4b4"></div><div class="a" style="left:751px;top:302px;width:4px;height:1px;background:#b4b4b4"></div><div class="a" style="left:723px;top:409px;width:4px;height:1px;background:#b4b4b4"></div><div class="a" style="left:751px;top:409px;width:4px;height:1px;background:#b4b4b4"></div><div class="a" style="left:723px;top:516px;width:4px;height:1px;background:#b4b4b4"></div><div class="a" style="left:751px;top:516px;width:4px;height:1px;background:#b4b4b4"></div>
<div class="a" style="left:760px;top:76px;width:1px;height:453px;background:#a0a0a0"></div>
<!-- cursor group -->
<div class="gb" style="left:766px;top:84px;width:223px;height:314px"></div>
<div class="gbt" style="left:771px;top:78px">CH1 Cursor</div>
<div class="t" style="left:778px;top:110px">dy:</div>
<div class="t" style="left:778px;top:137px">y1:</div>
<div class="t" style="left:778px;top:164px">y2:</div>
<div class="t" style="left:778px;top:191px">dx:</div>
<div class="t" style="left:778px;top:218px">x1:</div>
<div class="t" style="left:778px;top:245px">x2:</div>
<div class="t" style="left:778px;top:271px">Divisions:</div>
<div class="t" style="left:843px;top:271px">[-20~20]</div>
<div class="t" style="left:843px;top:298px">3.81</div>
<div class="t" style="left:778px;top:329px">Type:</div>
<div class="combo" style="left:843px;top:323px;width:134px"><span style="top:5px">None</span><i></i></div>
<!-- time/div -->
<div class="gb" style="left:766px;top:409px;width:223px;height:55px"></div>
<div class="gbt" style="left:771px;top:402px">CH1 Time / Div</div>
<div class="t" style="left:778px;top:434px">scale:</div>
<div class="combo" style="left:843px;top:427px;width:134px"><span>500us</span><i></i></div>
<!-- volt/div -->
<div class="gb" style="left:766px;top:474px;width:223px;height:53px"></div>
<div class="gbt" style="left:771px;top:468px">CH1 Volt / Div</div>
<div class="t" style="left:778px;top:499px">scale:</div>
<div class="combo" style="left:843px;top:492px;width:134px"><span>10.0V</span><i></i></div>
<!-- channel table -->
<div class="a" style="left:10px;top:533px;width:650px;height:107px;border:1px solid #a0a0a0;background:#fff"></div>
<div class="a" style="left:11px;top:534px;width:648px;height:21px;background:linear-gradient(#fdfdfd,#f4f4f4 50%,#e6e6e6)"></div>
<div class="a" style="left:174px;top:534px;width:1px;height:105px;background:#f0f0f0"></div>
<div class="a" style="left:335px;top:534px;width:1px;height:105px;background:#f0f0f0"></div>
<div class="a" style="left:497px;top:534px;width:1px;height:105px;background:#f0f0f0"></div>
<div class="a" style="left:11px;top:577px;width:648px;height:1px;background:#f0f0f0"></div>
<div class="a" style="left:11px;top:599px;width:648px;height:1px;background:#f0f0f0"></div>
<div class="a" style="left:11px;top:621px;width:648px;height:1px;background:#f0f0f0"></div>
<svg class="a" style="left:20px;top:539px" width="13" height="13" viewBox="0 0 13 13"><rect x=".5" y=".5" width="12" height="12" fill="#f4f4fa" stroke="#8e8f8f"/><rect x="2" y="2" width="9" height="9" fill="#e6e6f2" stroke="#d8d8e4" stroke-width=".6"/><path d="M3.7 6.2l1.8 3.2 4.2-7" fill="none" stroke="#4b4b7a" stroke-width="1.7" stroke-linecap="round" stroke-linejoin="round"/></svg>
<svg class="a" style="left:20px;top:561px" width="13" height="13" viewBox="0 0 13 13"><rect x=".5" y=".5" width="12" height="12" fill="#f4f4fa" stroke="#8e8f8f"/><rect x="2" y="2" width="9" height="9" fill="#e6e6f2" stroke="#d8d8e4" stroke-width=".6"/><path d="M3.7 6.2l1.8 3.2 4.2-7" fill="none" stroke="#4b4b7a" stroke-width="1.7" stroke-linecap="round" stroke-linejoin="round"/></svg>
<svg class="a" style="left:20px;top:583px" width="13" height="13" viewBox="0 0 13 13"><rect x=".5" y=".5" width="12" height="12" fill="#f4f4fa" stroke="#8e8f8f"/><rect x="2" y="2" width="9" height="9" fill="#e6e6f2" stroke="#d8d8e4" stroke-width=".6"/><path d="M3.7 6.2l1.8 3.2 4.2-7" fill="none" stroke="#4b4b7a" stroke-width="1.7" stroke-linecap="round" stroke-linejoin="round"/></svg>
<svg class="a" style="left:20px;top:605px" width="13" height="13" viewBox="0 0 13 13"><rect x=".5" y=".5" width="12" height="12" fill="#f4f4fa" stroke="#8e8f8f"/><rect x="2" y="2" width="9" height="9" fill="#e6e6f2" stroke="#d8d8e4" stroke-width=".6"/><path d="M3.7 6.2l1.8 3.2 4.2-7" fill="none" stroke="#4b4b7a" stroke-width="1.7" stroke-linecap="round" stroke-linejoin="round"/></svg>

<div class="t" style="left:42px;top:539px;font-size:12px">CH1</div>
<div class="t" style="left:42px;top:561px;font-size:12px">CH2</div>
<div class="t" style="left:42px;top:583px;font-size:12px">CH3</div>
<div class="t" style="left:42px;top:604px;font-size:12px">CH4</div>
<div class="t" style="left:294px;top:539px;font-size:12.6px">500us</div>
<div class="t" style="left:294px;top:561px;font-size:12.6px">500us</div>
<div class="t" style="left:294px;top:583px;font-size:12.6px">500us</div>
<div class="t" style="left:294px;top:604px;font-size:12.6px">500us</div>
<div class="t" style="left:457px;top:539px;font-size:12.2px">10.0V</div>
<div class="t" style="left:457px;top:561px;font-size:12.2px">10.0V</div>
<div class="t" style="left:457px;top:583px;font-size:12.2px">10.0V</div>
<div class="t" style="left:457px;top:604px;font-size:12.2px">10.0V</div>
<div class="t" style="left:503px;top:539px">/10.0</div>
<div class="t" style="left:503px;top:561px">/10.0</div>
<div class="t" style="left:503px;top:583px">/10.0</div>
<div class="t" style="left:503px;top:604px">/10.0</div>
<!-- buttons -->
<div class="btn dis" style="left:11px;top:642px;width:310px">To FFT. Current status not support for this compute.</div>
<div class="btn" style="left:327px;top:642px;width:102px">To Mathematics</div>
<div class="btn" style="left:434px;top:642px;width:58px">Inverted</div>
<div class="btn dis" style="left:497px;top:642px;width:57px;font-size:12.4px;line-height:22px">Remove</div>
<div class="a" style="left:10px;top:667px;width:650px;height:1px;background:#d2d2d2;box-shadow:0 1px 0 #fff"></div>
<!-- waveform info -->
<div class="gb" style="left:665px;top:542px;width:324px;height:123px"></div>
<div class="gbt" style="left:669px;top:535px">CH1 WaveForm Info</div>
<div class="a" style="left:676px;top:555px;width:301px;height:106px;border:1px solid #828790;background:#fff"></div>
<div class="a" style="left:677px;top:556px;width:299px;height:23px;background:linear-gradient(#fff,#f4f4f4);border-bottom:1px solid #d5d5d5"></div>
<div class="a" style="left:797px;top:556px;width:1px;height:104px;background:#ececec"></div>
<div class="a" style="left:957px;top:556px;width:1px;height:104px;background:#ececec"></div>
<div class="a" style="left:677px;top:600px;width:299px;height:1px;background:#f0f0f0"></div>
<div class="a" style="left:677px;top:621px;width:299px;height:1px;background:#f0f0f0"></div>
<div class="a" style="left:677px;top:642px;width:299px;height:1px;background:#f0f0f0"></div>
<div class="t" style="left:684px;top:562px">Type</div>
<div class="t" style="left:803px;top:562px">Value</div>
<div class="t" style="left:684px;top:584px;font-size:12.4px">Frequency:</div>
<div class="t" style="left:803px;top:584px;font-size:12.4px">1.000 kHz</div>
<div class="t" style="left:684px;top:605px;font-size:12.4px">Period:</div>
<div class="t" style="left:803px;top:605px;font-size:12.4px">999.998 uS</div>
<div class="t" style="left:684px;top:626px;font-size:12.4px">PK-PK:</div>
<div class="t" style="left:803px;top:626px;font-size:12.4px">78.1mV</div>
<!-- status -->
<div class="t" style="left:17px;top:678px;font-size:12.45px">D:\XDS3004\DSO\2017-06-06 11_45_08_678.bin</div>
<div class="t" style="left:799px;top:678px;color:#4e8a32;font-size:12.6px">automatically check USB:</div>
<svg class="a" style="left:940px;top:670px" width="52" height="27" viewBox="940 670 52 27">
<g fill="none" stroke="#3a3a3a" stroke-width="1.3" stroke-linecap="round">
<path d="M948.5 683.8H960"/>
<path d="M951.5 683.8q1.5-3.8 5-4"/>
<path d="M953 683.8q0.5 3.5 6 3.5"/>
</g>
<circle cx="948.6" cy="683.8" r="1.5" fill="#3a3a3a"/>
<circle cx="956.6" cy="679.8" r="1.4" fill="#3a3a3a"/>
<rect x="958.2" y="686.2" width="2.4" height="2.4" fill="#3a3a3a"/>
<path d="M959 681.6l4 2.2-4 2.2z" fill="#3a3a3a"/>
<path d="M969.5 676v17" stroke="#d8d8d8" stroke-width="1"/>
<path d="M974 682.8h7.2l-3.6 4z" fill="#303030"/>
</svg>

</body></html>
